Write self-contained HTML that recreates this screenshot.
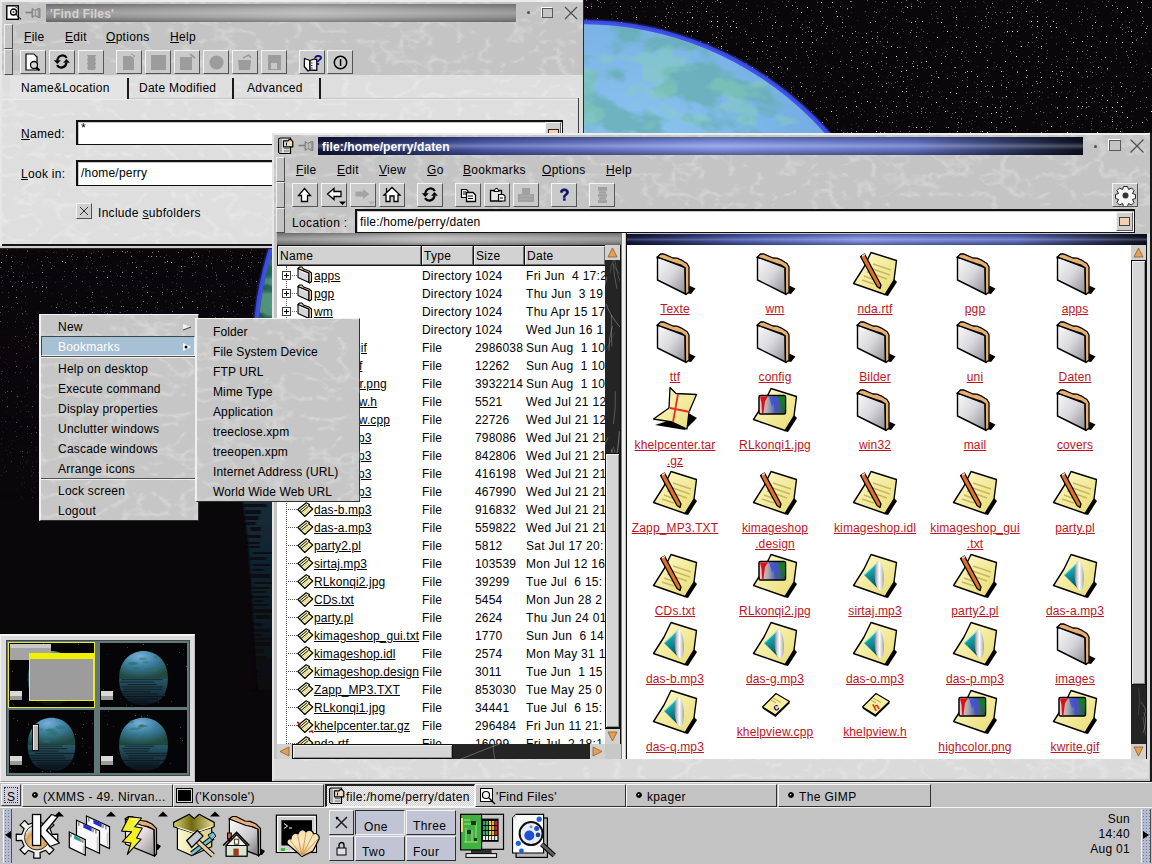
<!DOCTYPE html>
<html><head><meta charset="utf-8"><style>
*{margin:0;padding:0;box-sizing:border-box}
html,body{width:1152px;height:864px;overflow:hidden;background:#050307;font-family:"Liberation Sans",sans-serif;font-size:12px;color:#000}
.a{position:absolute}
.t{position:absolute;white-space:pre;line-height:14px}
.u{text-decoration:underline}
</style></head><body>
<svg class="a" style="left:0;top:0" width="1152" height="864">
<defs>
<radialGradient id="pl" cx="0.58" cy="0.22" r="0.72">
<stop offset="0" stop-color="#90c8f2"/><stop offset="0.45" stop-color="#70aae0"/><stop offset="0.62" stop-color="#4a88b8"/><stop offset="0.78" stop-color="#2a6a60"/><stop offset="0.92" stop-color="#1a4a38"/>
</radialGradient>
<filter id="clouds" x="0" y="0" width="1" height="1">
<feTurbulence type="fractalNoise" baseFrequency="0.018 0.03" numOctaves="4" seed="9" result="n"/>
<feColorMatrix in="n" type="matrix" values="0 0 0 0 0.13  0 0 0 0 0.42  0 0 0 0 0.42  -7 0 0 0 3.6" result="g"/>
<feComposite in="g" in2="SourceGraphic" operator="in"/>
</filter>
<filter id="clouds2" x="0" y="0" width="1" height="1">
<feTurbulence type="fractalNoise" baseFrequency="0.025 0.04" numOctaves="3" seed="21" result="n"/>
<feColorMatrix in="n" type="matrix" values="0 0 0 0 0.25  0 0 0 0 0.65  0 0 0 0 0.45  -7 0 0 0 3.4" result="g"/>
<feComposite in="g" in2="SourceGraphic" operator="in"/>
</filter>
<linearGradient id="reflg" x1="0" y1="500" x2="0" y2="700" gradientUnits="userSpaceOnUse"><stop offset="0" stop-color="#142c3a"/><stop offset="0.55" stop-color="#0e1e28"/><stop offset="1" stop-color="#0a070b"/></linearGradient>
<filter id="rblur" x="-5%" y="-5%" width="110%" height="110%"><feGaussianBlur stdDeviation="0.8 0.5"/></filter>
<clipPath id="upper"><rect x="0" y="0" width="1152" height="500"/></clipPath>
<filter id="st" x="0" y="0" width="1152" height="500" filterUnits="userSpaceOnUse" color-interpolation-filters="sRGB">
<feTurbulence type="fractalNoise" baseFrequency="0.8" numOctaves="1" seed="3" result="n"/>
<feColorMatrix in="n" type="matrix" values="1 0 0 0 0  1 0 0 0 0  1 0 0 0 0  0 0 0 0 1" result="a"/>
<feComponentTransfer in="a">
<feFuncR type="linear" slope="10" intercept="-6.9"/>
<feFuncG type="linear" slope="10" intercept="-6.9"/>
<feFuncB type="linear" slope="10" intercept="-6.9"/>
</feComponentTransfer>
<feColorMatrix type="matrix" values="0.95 0 0 0 0.04  0 0.95 0 0 0.028  0 0 0.95 0 0.045  0 0 0 0 1"/>
</filter>
<linearGradient id="stfade" x1="0" y1="0" x2="0" y2="1"><stop offset="0" stop-color="#fff"/><stop offset="0.42" stop-color="#fff"/><stop offset="0.56" stop-color="#999"/><stop offset="1" stop-color="#333"/></linearGradient>
<mask id="stmask" maskUnits="userSpaceOnUse" x="0" y="0" width="1152" height="500"><rect width="1152" height="500" fill="url(#stfade)"/></mask>
</defs>
<rect width="1152" height="864" fill="#0a070b"/>
<g mask="url(#stmask)"><rect width="1152" height="500" fill="#000" filter="url(#st)" /></g>
<g clip-path="url(#upper)">
<circle cx="582" cy="349" r="330.5" fill="rgba(50,60,200,0.35)"/>
<circle cx="582" cy="349" r="329" fill="#3848e0"/>
<circle cx="582" cy="349" r="325" fill="url(#pl)"/>
<circle cx="582" cy="349" r="324.5" fill="#000" filter="url(#clouds)" opacity="0.7"/><circle cx="582" cy="349" r="324.5" fill="#000" filter="url(#clouds2)" opacity="0.45"/>
<circle cx="582" cy="349" r="326" fill="none" stroke="rgba(70,90,235,0.5)" stroke-width="2.5"/>
</g>
<g filter="url(#rblur)"><polygon points="243,502 248,540 251,580 254,630 258,690 300,690 300,502" fill="url(#reflg)"/><rect x="243" y="504" width="24" height="3" fill="#0a070b" opacity="0.8"/><rect x="245" y="510" width="16" height="4" fill="#0a070b" opacity="0.8"/><rect x="244" y="516" width="15" height="4" fill="#0a070b" opacity="0.8"/><rect x="242" y="522" width="14" height="3" fill="#0a070b" opacity="0.8"/><rect x="250" y="527" width="11" height="4" fill="#0a070b" opacity="0.8"/><rect x="246" y="535" width="15" height="3" fill="#0a070b" opacity="0.8"/><rect x="248" y="542" width="12" height="2" fill="#0a070b" opacity="0.8"/><rect x="243" y="546" width="17" height="2" fill="#0a070b" opacity="0.8"/><rect x="253" y="552" width="24" height="2" fill="#0a070b" opacity="0.8"/><rect x="250" y="557" width="16" height="3" fill="#0a070b" opacity="0.8"/><rect x="252" y="564" width="19" height="2" fill="#0a070b" opacity="0.8"/><rect x="252" y="569" width="12" height="2" fill="#0a070b" opacity="0.8"/><rect x="247" y="574" width="23" height="4" fill="#0a070b" opacity="0.8"/><rect x="254" y="582" width="18" height="2" fill="#0a070b" opacity="0.8"/><rect x="251" y="587" width="19" height="2" fill="#0a070b" opacity="0.8"/><rect x="253" y="591" width="13" height="2" fill="#0a070b" opacity="0.8"/><rect x="248" y="596" width="22" height="2" fill="#0a070b" opacity="0.8"/><rect x="254" y="600" width="10" height="2" fill="#0a070b" opacity="0.8"/><rect x="244" y="604" width="25" height="2" fill="#0a070b" opacity="0.8"/><rect x="251" y="609" width="23" height="4" fill="#0a070b" opacity="0.8"/><rect x="255" y="615" width="16" height="4" fill="#0a070b" opacity="0.8"/><rect x="251" y="623" width="12" height="3" fill="#0a070b" opacity="0.8"/><rect x="246" y="629" width="23" height="3" fill="#0a070b" opacity="0.8"/><rect x="249" y="634" width="13" height="2" fill="#0a070b" opacity="0.8"/><rect x="254" y="638" width="25" height="2" fill="#0a070b" opacity="0.8"/><rect x="255" y="642" width="16" height="4" fill="#0a070b" opacity="0.8"/><rect x="250" y="649" width="14" height="4" fill="#0a070b" opacity="0.8"/><rect x="254" y="656" width="13" height="4" fill="#0a070b" opacity="0.8"/><rect x="251" y="663" width="10" height="3" fill="#0a070b" opacity="0.8"/><rect x="253" y="669" width="10" height="4" fill="#0a070b" opacity="0.8"/><rect x="255" y="675" width="13" height="2" fill="#0a070b" opacity="0.8"/><rect x="252" y="679" width="24" height="2" fill="#0a070b" opacity="0.8"/><rect x="262" y="684" width="20" height="2" fill="#0a070b" opacity="0.8"/><rect x="251" y="689" width="12" height="3" fill="#0a070b" opacity="0.8"/></g>
</svg><div class="a" style="left:0px;top:0px;width:584px;height:249px;background:#2a2a2a;"></div><div class="a" style="left:0px;top:0px;width:583px;height:248px;background:#c4c4c4;border-top:2px solid #ededed;border-left:2px solid #e6e6e6;"></div><svg width="0" height="0" style="position:absolute"><defs>
<filter id="marble" x="0" y="0" width="100%" height="100%" color-interpolation-filters="sRGB">
<feTurbulence type="turbulence" baseFrequency="0.035 0.05" numOctaves="3" seed="5" result="t"/>
<feColorMatrix in="t" type="matrix" values="0 0 0 0 1  0 0 0 0 1  0 0 0 0 1  -4 0 0 0 1.0" result="w"/>
<feComponentTransfer in="w"><feFuncA type="linear" slope="0.3" intercept="0"/></feComponentTransfer>
</filter>
</defs></svg><svg class="a" style="left:2px;top:2px;opacity:1.0" width="581" height="73"><rect width="581" height="73" fill="#fff" filter="url(#marble)"/></svg><svg class="a" style="left:6px;top:5px;" width="17" height="17" viewBox="0 0 17 17"><rect x="0.8" y="0.8" width="11.5" height="13.5" fill="#fff" stroke="#000" stroke-width="1.4"/><circle cx="7.5" cy="7" r="3" fill="none" stroke="#000" stroke-width="1.3"/><circle cx="7.5" cy="7" r="1" fill="#303060"/><path d="M10 9.5l5 5" stroke="#000" stroke-width="1.3" stroke-dasharray="1.2 0.6"/><path d="M9.5 1.8l1.5 1.5" stroke="#000"/></svg><svg class="a" style="left:25px;top:7px;" width="16" height="12" viewBox="0 0 16 12"><path d="M0.5 5.5h7" stroke="#808080" stroke-width="1.6"/><path d="M7 1.5L10 3.5L13 1.5L15 1.5L15 10.5L13 10.5L10 8.5L7 10.5z" fill="#9a9a9a" stroke="#7a7a7a" stroke-width="0.8"/><path d="M9 3.5v5M12 3.5v5" stroke="#e0e0e0" stroke-width="1"/></svg><div class="a" style="left:46px;top:4px;width:470px;height:18px;background:linear-gradient(to bottom,rgba(0,0,0,.22) 0%,rgba(255,255,255,.0) 28%,rgba(255,255,255,.16) 50%,rgba(0,0,0,0) 72%,rgba(0,0,0,.28) 100%),linear-gradient(to right,#8a8a8a 0%,#b4b4b4 55%,#8e8e8e 100%)"></div><div class="t" style="left:50px;top:7px;font-size:12px;color:#d2d2d2;font-weight:bold;letter-spacing:0.2px;">'Find Files'</div><div class="a" style="left:527px;top:11px;width:3px;height:3px;background:#505050;border-radius:2px;"></div><div class="a" style="left:542px;top:8px;width:11px;height:10px;border:1px solid #5a5a5a;box-shadow:-1px -1px 0 #fff;"></div><svg class="a" style="left:564px;top:6px;" width="14" height="14" viewBox="0 0 14 14"><path d="M1 1L13 13M13 1L1 13" stroke="#505050" stroke-width="1.2"/></svg><div class="a" style="left:4px;top:24px;width:9px;height:25px;background:#c4c4c4;border-style:solid;border-width:1px;border-color:#f0f0f0 #505050 #505050 #f0f0f0;"></div><div class="a" style="left:4px;top:49px;width:9px;height:26px;background:#c4c4c4;border-style:solid;border-width:1px;border-color:#f0f0f0 #505050 #505050 #f0f0f0;"></div><div class="t" style="left:24px;top:30px;font-size:12px;color:#000;letter-spacing:0.3px;"><u>F</u>ile</div><div class="t" style="left:65px;top:30px;font-size:12px;color:#000;letter-spacing:0.3px;"><u>E</u>dit</div><div class="t" style="left:106px;top:30px;font-size:12px;color:#000;letter-spacing:0.3px;"><u>O</u>ptions</div><div class="t" style="left:170px;top:30px;font-size:12px;color:#000;letter-spacing:0.3px;"><u>H</u>elp</div><div class="a" style="left:20px;top:50px;width:26px;height:24px;background:#cacaca;border-style:solid;border-width:1px;border-color:#f4f4f4 #555555 #555555 #f4f4f4;"></div><svg class="a" style="left:21px;top:51px;" width="24" height="22" viewBox="0 0 24 22"><path d="M5 3h8l3 3v13H5z" fill="#fff" stroke="#000" stroke-width="1.2"/><circle cx="13" cy="14" r="3.5" fill="#d8d8d8" stroke="#000" stroke-width="1.3"/><path d="M15.5 16.5l3 3" stroke="#000" stroke-width="2"/></svg><div class="a" style="left:49px;top:50px;width:26px;height:24px;background:#cacaca;border-style:solid;border-width:1px;border-color:#f4f4f4 #555555 #555555 #f4f4f4;"></div><svg class="a" style="left:50px;top:51px;" width="24" height="22" viewBox="0 0 24 22"><path d="M7.3 9.8A5.2 5.6 0 0 1 16.8 7" fill="none" stroke="#000" stroke-width="2.2"/><path d="M3.8 9.2L10.8 9.2L7.3 13Z" fill="#000"/><path d="M7 14.2A5.2 5.6 0 0 0 16.4 11.8" fill="none" stroke="#000" stroke-width="2.2"/><path d="M13.1 11.8L19.9 11.8L16.5 8Z" fill="#000"/></svg><div class="a" style="left:78px;top:50px;width:26px;height:24px;background:#cacaca;border-style:solid;border-width:1px;border-color:#f4f4f4 #555555 #555555 #f4f4f4;"></div><svg class="a" style="left:79px;top:51px;" width="24" height="22" viewBox="0 0 24 22"><path d="M8 4h9l-1 3l1 1l-1 3l1 1l-1 3l1 1l-1 3h-7l-1-3l1-1l-1-3l1-1l-1-3l1-1z" fill="#9c9c9c"/></svg><div class="a" style="left:116px;top:50px;width:26px;height:24px;background:#cacaca;border-style:solid;border-width:1px;border-color:#f4f4f4 #555555 #555555 #f4f4f4;"></div><svg class="a" style="left:117px;top:51px;" width="24" height="22" viewBox="0 0 24 22"><path d="M6 5h8l3 3v11H6z" fill="#9c9c9c"/><path d="M14 3l4 2l-3 2" fill="none" stroke="#9c9c9c"/></svg><div class="a" style="left:145px;top:50px;width:26px;height:24px;background:#cacaca;border-style:solid;border-width:1px;border-color:#f4f4f4 #555555 #555555 #f4f4f4;"></div><svg class="a" style="left:146px;top:51px;" width="24" height="22" viewBox="0 0 24 22"><rect x="5" y="4" width="15" height="15" fill="#9c9c9c"/></svg><div class="a" style="left:174px;top:50px;width:26px;height:24px;background:#cacaca;border-style:solid;border-width:1px;border-color:#f4f4f4 #555555 #555555 #f4f4f4;"></div><svg class="a" style="left:175px;top:51px;" width="24" height="22" viewBox="0 0 24 22"><path d="M5 6h12v13H5z" fill="#9c9c9c"/><path d="M15 3l5 4" stroke="#9c9c9c" stroke-width="2"/></svg><div class="a" style="left:203px;top:50px;width:26px;height:24px;background:#cacaca;border-style:solid;border-width:1px;border-color:#f4f4f4 #555555 #555555 #f4f4f4;"></div><svg class="a" style="left:204px;top:51px;" width="24" height="22" viewBox="0 0 24 22"><circle cx="12.5" cy="11.5" r="7" fill="#9c9c9c"/></svg><div class="a" style="left:232px;top:50px;width:26px;height:24px;background:#cacaca;border-style:solid;border-width:1px;border-color:#f4f4f4 #555555 #555555 #f4f4f4;"></div><svg class="a" style="left:233px;top:51px;" width="24" height="22" viewBox="0 0 24 22"><path d="M5 9h13l-1 10H6z" fill="#9c9c9c"/><path d="M10 7l6-3l2 3" fill="none" stroke="#9c9c9c" stroke-width="1.5"/></svg><div class="a" style="left:261px;top:50px;width:26px;height:24px;background:#cacaca;border-style:solid;border-width:1px;border-color:#f4f4f4 #555555 #555555 #f4f4f4;"></div><svg class="a" style="left:262px;top:51px;" width="24" height="22" viewBox="0 0 24 22"><rect x="6" y="4" width="13" height="15" fill="#9c9c9c"/><rect x="9" y="12" width="6" height="6" fill="#c8c8c8"/></svg><div class="a" style="left:299px;top:50px;width:26px;height:24px;background:#cacaca;border-style:solid;border-width:1px;border-color:#f4f4f4 #555555 #555555 #f4f4f4;"></div><svg class="a" style="left:300px;top:51px;" width="24" height="22" viewBox="0 0 24 22"><path d="M4.5 7.5L10 9.5L10 19L8 20L4.3 15.5Z" fill="#fff" stroke="#000" stroke-width="1.3" stroke-linejoin="round"/><path d="M10 9.5L14.2 8L16.8 8.5L16.8 19.4L10 19Z" fill="#f0f0f0" stroke="#000" stroke-width="1.3" stroke-linejoin="round"/><path d="M11 12h1.5M11 14.5h1.5M11 17h1.5" stroke="#000" stroke-width="0.8"/><text x="13.5" y="14" font-family="Liberation Sans" font-weight="bold" font-size="15" fill="#10107a">?</text></svg><div class="a" style="left:327px;top:50px;width:26px;height:24px;background:#cacaca;border-style:solid;border-width:1px;border-color:#f4f4f4 #555555 #555555 #f4f4f4;"></div><svg class="a" style="left:328px;top:51px;" width="24" height="22" viewBox="0 0 24 22"><circle cx="12.5" cy="11.5" r="6.2" fill="none" stroke="#000" stroke-width="1.5"/><rect x="11.8" y="8" width="1.5" height="7" fill="#000"/></svg><div class="a" style="left:2px;top:75px;width:581px;height:170px;background:#dedede;"></div><svg class="a" style="left:2px;top:75px;opacity:1.0" width="577" height="169"><rect width="577" height="169" fill="#fff" filter="url(#marble)"/></svg><div class="a" style="left:128px;top:98px;width:451px;height:1px;background:#c4c4c4;"></div><div class="a" style="left:2px;top:99px;width:577px;height:1px;background:#ececec;"></div><div class="a" style="left:10px;top:76px;width:118px;height:23px;background:#e4e4e4;"></div><div class="a" style="left:127px;top:78px;width:2px;height:21px;background:#1a1a1a;"></div><div class="a" style="left:232px;top:78px;width:2px;height:21px;background:#1a1a1a;"></div><div class="a" style="left:319px;top:78px;width:2px;height:21px;background:#1a1a1a;"></div><div class="a" style="left:578px;top:98px;width:1px;height:146px;background:#404040;"></div><div class="t" style="left:21px;top:81px;font-size:12px;color:#000;letter-spacing:0.25px;">Name&amp;Location</div><div class="t" style="left:139px;top:81px;font-size:12px;color:#000;letter-spacing:0.25px;">Date Modified</div><div class="t" style="left:247px;top:81px;font-size:12px;color:#000;letter-spacing:0.3px;">Advanced</div><div class="t" style="left:21px;top:127px;font-size:12px;color:#000;letter-spacing:0.3px;"><u>N</u>amed:</div><div class="a" style="left:76px;top:120px;width:487px;height:25px;background:#fff;border-top:2px solid #101010;border-left:2px solid #101010;border-right:1px solid #101010;border-bottom:1px solid #101010;box-shadow:inset 1px 1px 0 #c8c8c8;"></div><div class="t" style="left:81px;top:121px;font-size:12px;color:#000;">*</div><div class="a" style="left:545px;top:122px;width:16px;height:16px;background:#cfcfcf;border-style:solid;border-width:1px;border-color:#f4f4f4 #606060 #606060 #f4f4f4;"></div><div class="a" style="left:548px;top:129px;width:11px;height:6px;background:#f0d0b8;border:1px solid #302010;"></div><div class="t" style="left:21px;top:167px;font-size:12px;color:#000;letter-spacing:0.3px;"><u>L</u>ook in:</div><div class="a" style="left:76px;top:160px;width:487px;height:26px;background:#fff;border-top:2px solid #101010;border-left:2px solid #101010;border-right:1px solid #101010;border-bottom:1px solid #101010;box-shadow:inset 1px 1px 0 #c8c8c8;"></div><div class="t" style="left:81px;top:166px;font-size:12px;color:#000;letter-spacing:0.2px;">/home/perry</div><div class="a" style="left:76px;top:203px;width:16px;height:16px;background:#d0d0d0;border-style:solid;border-width:1px;border-color:#f4f4f4 #505050 #505050 #f4f4f4;"></div><svg class="a" style="left:78px;top:205px;" width="12" height="12" viewBox="0 0 12 12"><path d="M2 2L10 10M10 2L2 10" stroke="#303030" stroke-width="1"/></svg><div class="t" style="left:98px;top:206px;font-size:12px;color:#000;letter-spacing:0.3px;">Include <u>s</u>ubfolders</div><div class="a" style="left:2px;top:244px;width:581px;height:2px;background:#141414;"></div><div class="a" style="left:0px;top:246px;width:583px;height:2px;background:#d0d0d0;"></div><div class="a" style="left:272px;top:133px;width:880px;height:649px;background:#1a1a1a;"></div><div class="a" style="left:272px;top:133px;width:878px;height:648px;background:#c4c4c4;border-top:2px solid #ededed;border-left:2px solid #e6e6e6;"></div><svg class="a" style="left:274px;top:135px;opacity:1.0" width="876" height="98"><rect width="876" height="98" fill="#fff" filter="url(#marble)"/></svg><svg class="a" style="left:278px;top:137px;" width="17" height="18" viewBox="0 0 17 18"><path d="M0.6 2L2 1L12.5 1L12.5 16.5L2 16.5L0.6 15.5Z" fill="#d4d4d4" stroke="#000" stroke-width="1.2"/><rect x="1.6" y="2" width="3" height="13.5" fill="#a8a8a8"/><path d="M4.8 2v14" stroke="#fff" stroke-width="0.8"/><path d="M6 11.5h5M6 14h5" stroke="#707070" stroke-width="0.9"/><path d="M5.5 3.8L10 3.8L11 2.6L13 2.6L14.8 4.6L14.8 9.8L5.5 9.8Z" fill="#f0dcc0" stroke="#000" stroke-width="1.2" stroke-linejoin="round"/><path d="M8.5 5.5v3" stroke="#000" stroke-width="1"/></svg><svg class="a" style="left:298px;top:140px;" width="16" height="12" viewBox="0 0 16 12"><path d="M0.5 5.5h7" stroke="#808080" stroke-width="1.6"/><path d="M7 1.5L10 3.5L13 1.5L15 1.5L15 10.5L13 10.5L10 8.5L7 10.5z" fill="#9a9a9a" stroke="#7a7a7a" stroke-width="0.8"/><path d="M9 3.5v5M12 3.5v5" stroke="#e0e0e0" stroke-width="1"/></svg><div class="a" style="left:318px;top:137px;width:765px;height:18px;background:linear-gradient(to bottom,rgba(0,0,0,0.3) 0%,rgba(0,0,0,0) 30%,rgba(255,255,255,0.25) 50%,rgba(0,0,0,0) 70%,rgba(0,0,0,0.35) 100%),linear-gradient(to right,#10163a 0%,#4a58a8 22%,#8090e0 52%,#6070c0 78%,#0c1020 100%)"></div><div class="t" style="left:322px;top:140px;font-size:12px;color:#fff;font-weight:bold;letter-spacing:0.1px;">file:/home/perry/daten</div><div class="a" style="left:1094px;top:145px;width:3px;height:3px;background:#505050;border-radius:2px;"></div><div class="a" style="left:1109px;top:140px;width:12px;height:11px;border:1px solid #5a5a5a;box-shadow:-1px -1px 0 #fff;"></div><svg class="a" style="left:1129px;top:138px;" width="16" height="16" viewBox="0 0 16 16"><path d="M1.5 1.5L14.5 14.5M14.5 1.5L1.5 14.5" stroke="#505050" stroke-width="1.2"/></svg><div class="a" style="left:276px;top:157px;width:9px;height:25px;background:#c4c4c4;border-style:solid;border-width:1px;border-color:#f0f0f0 #505050 #505050 #f0f0f0;"></div><div class="a" style="left:276px;top:182px;width:9px;height:26px;background:#c4c4c4;border-style:solid;border-width:1px;border-color:#f0f0f0 #505050 #505050 #f0f0f0;"></div><div class="a" style="left:276px;top:208px;width:9px;height:25px;background:#c4c4c4;border-style:solid;border-width:1px;border-color:#f0f0f0 #505050 #505050 #f0f0f0;"></div><div class="t" style="left:296px;top:163px;font-size:12px;color:#000;letter-spacing:0.3px;"><u>F</u>ile</div><div class="t" style="left:337px;top:163px;font-size:12px;color:#000;letter-spacing:0.3px;"><u>E</u>dit</div><div class="t" style="left:379px;top:163px;font-size:12px;color:#000;letter-spacing:0.3px;"><u>V</u>iew</div><div class="t" style="left:427px;top:163px;font-size:12px;color:#000;letter-spacing:0.3px;"><u>G</u>o</div><div class="t" style="left:463px;top:163px;font-size:12px;color:#000;letter-spacing:0.3px;"><u>B</u>ookmarks</div><div class="t" style="left:542px;top:163px;font-size:12px;color:#000;letter-spacing:0.3px;"><u>O</u>ptions</div><div class="t" style="left:606px;top:163px;font-size:12px;color:#000;letter-spacing:0.3px;"><u>H</u>elp</div><div class="a" style="left:292px;top:183px;width:26px;height:24px;background:#cacaca;border-style:solid;border-width:1px;border-color:#f4f4f4 #555555 #555555 #f4f4f4;"></div><svg class="a" style="left:293px;top:184px;" width="24" height="22" viewBox="0 0 24 22"><path d="M11.5 4.5L17.5 11.5L14.5 11.5L14.5 17.5L8.5 17.5L8.5 11.5L5.5 11.5Z" fill="#fff" stroke="#000" stroke-width="1.3" stroke-linejoin="miter"/></svg><div class="a" style="left:321px;top:183px;width:26px;height:24px;background:#cacaca;border-style:solid;border-width:1px;border-color:#f4f4f4 #555555 #555555 #f4f4f4;"></div><svg class="a" style="left:322px;top:184px;" width="24" height="22" viewBox="0 0 24 22"><path d="M5.5 10L12 4.5L12 7.5L19 7.5L19 12.5L12 12.5L12 15.5Z" fill="#fff" stroke="#000" stroke-width="1.3"/><path d="M17 17.5h7l-3.5 3.5z" fill="#000"/></svg><div class="a" style="left:350px;top:183px;width:26px;height:24px;background:#cacaca;border-style:solid;border-width:1px;border-color:#f4f4f4 #555555 #555555 #f4f4f4;"></div><svg class="a" style="left:351px;top:184px;" width="24" height="22" viewBox="0 0 24 22"><path d="M18.5 10L12 5L12 7.5L4.5 7.5L4.5 12.5L12 12.5L12 15Z" fill="#a4a4a4"/><path d="M17 17.5h7l-3.5 3.5z" fill="#b0b0b0"/></svg><div class="a" style="left:379px;top:183px;width:26px;height:24px;background:#cacaca;border-style:solid;border-width:1px;border-color:#f4f4f4 #555555 #555555 #f4f4f4;"></div><svg class="a" style="left:380px;top:184px;" width="24" height="22" viewBox="0 0 24 22"><path d="M4 11L12 3.5L20 11L18 11L18 17.5L14 17.5L14 12L10 12L10 17.5L6 17.5L6 11Z" fill="#fff" stroke="#000" stroke-width="1.3"/><path d="M6.5 4V8" stroke="#000" stroke-width="1.2"/></svg><div class="a" style="left:417px;top:183px;width:26px;height:24px;background:#cacaca;border-style:solid;border-width:1px;border-color:#f4f4f4 #555555 #555555 #f4f4f4;"></div><svg class="a" style="left:418px;top:184px;" width="24" height="22" viewBox="0 0 24 22"><path d="M7.3 9.8A5.2 5.6 0 0 1 16.8 7" fill="none" stroke="#000" stroke-width="2.2"/><path d="M3.8 9.2L10.8 9.2L7.3 13Z" fill="#000"/><path d="M7 14.2A5.2 5.6 0 0 0 16.4 11.8" fill="none" stroke="#000" stroke-width="2.2"/><path d="M13.1 11.8L19.9 11.8L16.5 8Z" fill="#000"/></svg><div class="a" style="left:455px;top:183px;width:26px;height:24px;background:#cacaca;border-style:solid;border-width:1px;border-color:#f4f4f4 #555555 #555555 #f4f4f4;"></div><svg class="a" style="left:456px;top:184px;" width="24" height="22" viewBox="0 0 24 22"><path d="M5.5 5.5h5l1.5 1.5v6.5h-6.5z" fill="#fff" stroke="#000" stroke-width="1.2"/><path d="M7 8h3M7 10h3" stroke="#000"/><path d="M10.5 8.5h6.5l2.5 2.5v6.5h-9z" fill="#fff" stroke="#000" stroke-width="1.3"/><path d="M12 12h5M12 14.5h5" stroke="#000"/></svg><div class="a" style="left:484px;top:183px;width:26px;height:24px;background:#cacaca;border-style:solid;border-width:1px;border-color:#f4f4f4 #555555 #555555 #f4f4f4;"></div><svg class="a" style="left:485px;top:184px;" width="24" height="22" viewBox="0 0 24 22"><path d="M5.5 6.5h11v10.5h-11z" fill="#e8e8e8" stroke="#000" stroke-width="1.3"/><path d="M9 7.5l1.5-3h2l1.5 3z" fill="#fff" stroke="#000"/><path d="M13.5 10.5h5l1.5 1.5v5h-6.5z" fill="#fff" stroke="#000" stroke-width="1.2"/><path d="M15 14h3" stroke="#000"/></svg><div class="a" style="left:513px;top:183px;width:26px;height:24px;background:#cacaca;border-style:solid;border-width:1px;border-color:#f4f4f4 #555555 #555555 #f4f4f4;"></div><svg class="a" style="left:514px;top:184px;" width="24" height="22" viewBox="0 0 24 22"><path d="M8 4h8v6h4v8H4v-8h4z" fill="#a0a0a0"/><path d="M6 12h12M6 15h12" stroke="#b0b0b0"/></svg><div class="a" style="left:551px;top:183px;width:26px;height:24px;background:#cacaca;border-style:solid;border-width:1px;border-color:#f4f4f4 #555555 #555555 #f4f4f4;"></div><svg class="a" style="left:552px;top:184px;" width="24" height="22" viewBox="0 0 24 22"><path d="M8.3 8.3C8.3 5.8 10.2 4.8 12.4 4.8C14.8 4.8 16.6 6.1 16.6 8.3C16.6 10.4 14.9 11 13.9 11.8C13.3 12.3 13.3 12.8 13.3 13.4L11.3 13.4C11.3 12.4 11.4 11.5 12.3 10.8C13.3 10 14.2 9.6 14.2 8.4C14.2 7.4 13.5 6.8 12.4 6.8C11.3 6.8 10.6 7.5 10.6 8.6Z" fill="#10106a" stroke="#10106a" stroke-width="0.6"/><rect x="11.1" y="14.3" width="2.5" height="2.4" fill="#10106a"/></svg><div class="a" style="left:589px;top:183px;width:26px;height:24px;background:#cacaca;border-style:solid;border-width:1px;border-color:#f4f4f4 #555555 #555555 #f4f4f4;"></div><svg class="a" style="left:590px;top:184px;" width="24" height="22" viewBox="0 0 24 22"><path d="M8 3h9v4h-1v3h1v3h-1v3h1v3h-9v-3h1v-3h-1v-3h1v-3h-1z" fill="#a0a0a0"/><path d="M9 7h7M9 10h7M9 13h7M9 16h7" stroke="#b4b4b4"/></svg><div class="a" style="left:1112px;top:183px;width:26px;height:24px;background:#cacaca;border-style:solid;border-width:1px;border-color:#f4f4f4 #555555 #555555 #f4f4f4;"></div><svg class="a" style="left:1113px;top:184px;" width="24" height="22" viewBox="0 0 24 22"><g transform="translate(12.5 11.5)"><path d="M-2 -9h4l1 3l3 -1.5l2.5 2.5l-1.5 3l3 1v4l-3 1l1.5 3l-2.5 2.5l-3 -1.5l-1 3h-4l-1 -3l-3 1.5l-2.5 -2.5l1.5 -3l-3 -1v-4l3 -1l-1.5 -3l2.5 -2.5l3 1.5z" fill="#f4f4f4" stroke="#222" stroke-width="1"/><circle r="3" fill="#333"/></g></svg><div class="t" style="left:292px;top:216px;font-size:12px;color:#000;letter-spacing:0.35px;">Location :</div><div class="a" style="left:355px;top:209px;width:780px;height:24px;background:#fff;border-top:2px solid #101010;border-left:2px solid #101010;border-right:1px solid #101010;border-bottom:1px solid #101010;box-shadow:inset 1px 1px 0 #c8c8c8;"></div><div class="t" style="left:360px;top:215px;font-size:12px;color:#000;letter-spacing:0.2px;">file:/home/perry/daten</div><div class="a" style="left:1116px;top:212px;width:17px;height:19px;background:#cfcfcf;border-style:solid;border-width:1px;border-color:#f4f4f4 #606060 #606060 #f4f4f4;"></div><div class="a" style="left:1119px;top:217px;width:11px;height:9px;background:#f0d0b8;border:1px solid #504030;"></div><div class="a" style="left:277px;top:233px;width:344px;height:12px;background:linear-gradient(to bottom,rgba(0,0,0,.22) 0%,rgba(255,255,255,.0) 28%,rgba(255,255,255,.16) 50%,rgba(0,0,0,0) 72%,rgba(0,0,0,.28) 100%),linear-gradient(to right,#888888 0%,#b8b8b8 45%,#8c8c8c 100%)"></div><div class="a" style="left:277px;top:245px;width:328px;height:499px;background:#fff;"></div><div class="a" style="left:277px;top:245px;width:328px;height:21px;background:#101010;"></div><div class="a" style="left:278px;top:246px;width:143px;height:19px;background:#d2d2d2;border-style:solid;border-width:1px;border-color:#f0f0f0 #707070 #707070 #f0f0f0;"></div><div class="t" style="left:280px;top:249px;font-size:12px;color:#000;letter-spacing:0.3px;">Name</div><div class="a" style="left:422px;top:246px;width:51px;height:19px;background:#d2d2d2;border-style:solid;border-width:1px;border-color:#f0f0f0 #707070 #707070 #f0f0f0;"></div><div class="t" style="left:424px;top:249px;font-size:12px;color:#000;letter-spacing:0.3px;">Type</div><div class="a" style="left:474px;top:246px;width:50px;height:19px;background:#d2d2d2;border-style:solid;border-width:1px;border-color:#f0f0f0 #707070 #707070 #f0f0f0;"></div><div class="t" style="left:476px;top:249px;font-size:12px;color:#000;letter-spacing:0.3px;">Size</div><div class="a" style="left:525px;top:246px;width:80px;height:19px;background:#d2d2d2;border-style:solid;border-width:1px;border-color:#f0f0f0 #707070 #707070 #f0f0f0;"></div><div class="t" style="left:527px;top:249px;font-size:12px;color:#000;letter-spacing:0.3px;">Date</div><div class="a" style="left:286px;top:266px;width:1px;height:478px;border-left:1px dotted #606060;"></div><div class="a" style="left:0;top:0;width:605px;height:744px;overflow:hidden;clip-path:inset(266px 0 0 277px)"><div class="a" style="left:288px;top:275px;width:9px;height:1px;border-top:1px dotted #606060;"></div><div class="a" style="left:282px;top:271px;width:9px;height:9px;background:#fff;border:1px solid #404040;"></div><div class="a" style="left:284px;top:275px;width:5px;height:1px;background:#000;"></div><div class="a" style="left:286px;top:273px;width:1px;height:5px;background:#000;"></div><svg class="a" style="left:297px;top:266px;" width="17" height="18" viewBox="0 0 17 18"><path d="M1 2.5L12 7L12 16.5L1 11.5Z" fill="#d4d4dc" stroke="#000" stroke-width="1.1" stroke-linejoin="round"/><path d="M2.5 4.5L10 8" stroke="#f4f4f4" stroke-width="1"/><path d="M1 2.5L2.5 1L5 1L6.5 3L12 5L14.5 7L14.5 15.5L12.5 17L12 16.5L12 7Z" fill="#f0d4a0" stroke="#000" stroke-width="1.1" stroke-linejoin="round"/></svg><div class="t" style="left:314px;top:269px;font-size:12px;color:#000;text-decoration:underline;letter-spacing:0.1px;">apps</div><div class="t" style="left:422px;top:269px;font-size:12px;color:#000;letter-spacing:0.2px;">Directory</div><div class="t" style="left:475px;top:269px;font-size:12px;color:#000;letter-spacing:0.2px;">1024</div><div class="t" style="left:526px;top:269px;font-size:12px;color:#000;letter-spacing:0.3px;">Fri Jun  4 17:2</div><div class="a" style="left:288px;top:293px;width:9px;height:1px;border-top:1px dotted #606060;"></div><div class="a" style="left:282px;top:289px;width:9px;height:9px;background:#fff;border:1px solid #404040;"></div><div class="a" style="left:284px;top:293px;width:5px;height:1px;background:#000;"></div><div class="a" style="left:286px;top:291px;width:1px;height:5px;background:#000;"></div><svg class="a" style="left:297px;top:284px;" width="17" height="18" viewBox="0 0 17 18"><path d="M1 2.5L12 7L12 16.5L1 11.5Z" fill="#d4d4dc" stroke="#000" stroke-width="1.1" stroke-linejoin="round"/><path d="M2.5 4.5L10 8" stroke="#f4f4f4" stroke-width="1"/><path d="M1 2.5L2.5 1L5 1L6.5 3L12 5L14.5 7L14.5 15.5L12.5 17L12 16.5L12 7Z" fill="#f0d4a0" stroke="#000" stroke-width="1.1" stroke-linejoin="round"/></svg><div class="t" style="left:314px;top:287px;font-size:12px;color:#000;text-decoration:underline;letter-spacing:0.1px;">pgp</div><div class="t" style="left:422px;top:287px;font-size:12px;color:#000;letter-spacing:0.2px;">Directory</div><div class="t" style="left:475px;top:287px;font-size:12px;color:#000;letter-spacing:0.2px;">1024</div><div class="t" style="left:526px;top:287px;font-size:12px;color:#000;letter-spacing:0.3px;">Thu Jun  3 19</div><div class="a" style="left:288px;top:311px;width:9px;height:1px;border-top:1px dotted #606060;"></div><div class="a" style="left:282px;top:307px;width:9px;height:9px;background:#fff;border:1px solid #404040;"></div><div class="a" style="left:284px;top:311px;width:5px;height:1px;background:#000;"></div><div class="a" style="left:286px;top:309px;width:1px;height:5px;background:#000;"></div><svg class="a" style="left:297px;top:302px;" width="17" height="18" viewBox="0 0 17 18"><path d="M1 2.5L12 7L12 16.5L1 11.5Z" fill="#d4d4dc" stroke="#000" stroke-width="1.1" stroke-linejoin="round"/><path d="M2.5 4.5L10 8" stroke="#f4f4f4" stroke-width="1"/><path d="M1 2.5L2.5 1L5 1L6.5 3L12 5L14.5 7L14.5 15.5L12.5 17L12 16.5L12 7Z" fill="#f0d4a0" stroke="#000" stroke-width="1.1" stroke-linejoin="round"/></svg><div class="t" style="left:314px;top:305px;font-size:12px;color:#000;text-decoration:underline;letter-spacing:0.1px;">wm</div><div class="t" style="left:422px;top:305px;font-size:12px;color:#000;letter-spacing:0.2px;">Directory</div><div class="t" style="left:475px;top:305px;font-size:12px;color:#000;letter-spacing:0.2px;">1024</div><div class="t" style="left:526px;top:305px;font-size:12px;color:#000;letter-spacing:0.3px;">Thu Apr 15 17</div><div class="a" style="left:288px;top:329px;width:9px;height:1px;border-top:1px dotted #606060;"></div><div class="a" style="left:282px;top:325px;width:9px;height:9px;background:#fff;border:1px solid #404040;"></div><div class="a" style="left:284px;top:329px;width:5px;height:1px;background:#000;"></div><div class="a" style="left:286px;top:327px;width:1px;height:5px;background:#000;"></div><svg class="a" style="left:297px;top:320px;" width="17" height="18" viewBox="0 0 17 18"><path d="M1 2.5L12 7L12 16.5L1 11.5Z" fill="#d4d4dc" stroke="#000" stroke-width="1.1" stroke-linejoin="round"/><path d="M2.5 4.5L10 8" stroke="#f4f4f4" stroke-width="1"/><path d="M1 2.5L2.5 1L5 1L6.5 3L12 5L14.5 7L14.5 15.5L12.5 17L12 16.5L12 7Z" fill="#f0d4a0" stroke="#000" stroke-width="1.1" stroke-linejoin="round"/></svg><div class="t" style="left:314px;top:323px;font-size:12px;color:#000;text-decoration:underline;letter-spacing:0.1px;">Texte</div><div class="t" style="left:422px;top:323px;font-size:12px;color:#000;letter-spacing:0.2px;">Directory</div><div class="t" style="left:475px;top:323px;font-size:12px;color:#000;letter-spacing:0.2px;">1024</div><div class="t" style="left:526px;top:323px;font-size:12px;color:#000;letter-spacing:0.3px;">Wed Jun 16 1</div><div class="a" style="left:288px;top:347px;width:9px;height:1px;border-top:1px dotted #606060;"></div><svg class="a" style="left:297px;top:340px;" width="17" height="16" viewBox="0 0 17 16"><path d="M0.8 7.5L9.2 0.8L12.5 2.5L11.8 3.5L15.8 7L7.8 14.5Z" fill="#f4f0b8" stroke="#000" stroke-width="1.1" stroke-linejoin="round"/><path d="M2.5 9L10 2.8M4 10.5L11.5 4.3" stroke="#000" stroke-width="0.9"/><path d="M6 11l5-4.5M7.5 12.2l5-4.5" stroke="#c8c060" stroke-width="0.8"/></svg><div class="t" style="left:314px;top:341px;font-size:12px;color:#000;text-decoration:underline;letter-spacing:0.1px;">screen.gif</div><div class="t" style="left:422px;top:341px;font-size:12px;color:#000;letter-spacing:0.2px;">File</div><div class="t" style="left:475px;top:341px;font-size:12px;color:#000;letter-spacing:0.2px;">2986038</div><div class="t" style="left:526px;top:341px;font-size:12px;color:#000;letter-spacing:0.3px;">Sun Aug  1 10</div><div class="a" style="left:288px;top:365px;width:9px;height:1px;border-top:1px dotted #606060;"></div><svg class="a" style="left:297px;top:358px;" width="17" height="16" viewBox="0 0 17 16"><path d="M0.8 7.5L9.2 0.8L12.5 2.5L11.8 3.5L15.8 7L7.8 14.5Z" fill="#f4f0b8" stroke="#000" stroke-width="1.1" stroke-linejoin="round"/><path d="M2.5 9L10 2.8M4 10.5L11.5 4.3" stroke="#000" stroke-width="0.9"/><path d="M6 11l5-4.5M7.5 12.2l5-4.5" stroke="#c8c060" stroke-width="0.8"/></svg><div class="t" style="left:314px;top:359px;font-size:12px;color:#000;text-decoration:underline;letter-spacing:0.1px;">kwrite.gif</div><div class="t" style="left:422px;top:359px;font-size:12px;color:#000;letter-spacing:0.2px;">File</div><div class="t" style="left:475px;top:359px;font-size:12px;color:#000;letter-spacing:0.2px;">12262</div><div class="t" style="left:526px;top:359px;font-size:12px;color:#000;letter-spacing:0.3px;">Sun Aug  1 10</div><div class="a" style="left:288px;top:383px;width:9px;height:1px;border-top:1px dotted #606060;"></div><svg class="a" style="left:297px;top:376px;" width="17" height="16" viewBox="0 0 17 16"><path d="M0.8 7.5L9.2 0.8L12.5 2.5L11.8 3.5L15.8 7L7.8 14.5Z" fill="#f4f0b8" stroke="#000" stroke-width="1.1" stroke-linejoin="round"/><path d="M2.5 9L10 2.8M4 10.5L11.5 4.3" stroke="#000" stroke-width="0.9"/><path d="M6 11l5-4.5M7.5 12.2l5-4.5" stroke="#c8c060" stroke-width="0.8"/></svg><div class="t" style="left:314px;top:377px;font-size:12px;color:#000;text-decoration:underline;letter-spacing:0.1px;">highcolor.png</div><div class="t" style="left:422px;top:377px;font-size:12px;color:#000;letter-spacing:0.2px;">File</div><div class="t" style="left:475px;top:377px;font-size:12px;color:#000;letter-spacing:0.2px;">3932214</div><div class="t" style="left:526px;top:377px;font-size:12px;color:#000;letter-spacing:0.3px;">Sun Aug  1 10</div><div class="a" style="left:288px;top:401px;width:9px;height:1px;border-top:1px dotted #606060;"></div><svg class="a" style="left:297px;top:394px;" width="17" height="16" viewBox="0 0 17 16"><path d="M0.8 7.5L9.2 0.8L12.5 2.5L11.8 3.5L15.8 7L7.8 14.5Z" fill="#f4f0b8" stroke="#000" stroke-width="1.1" stroke-linejoin="round"/><path d="M2.5 9L10 2.8M4 10.5L11.5 4.3" stroke="#000" stroke-width="0.9"/><path d="M6 11l5-4.5M7.5 12.2l5-4.5" stroke="#c8c060" stroke-width="0.8"/></svg><div class="t" style="left:314px;top:395px;font-size:12px;color:#000;text-decoration:underline;letter-spacing:0.1px;">khelpview.h</div><div class="t" style="left:422px;top:395px;font-size:12px;color:#000;letter-spacing:0.2px;">File</div><div class="t" style="left:475px;top:395px;font-size:12px;color:#000;letter-spacing:0.2px;">5521</div><div class="t" style="left:526px;top:395px;font-size:12px;color:#000;letter-spacing:0.3px;">Wed Jul 21 12</div><div class="a" style="left:288px;top:419px;width:9px;height:1px;border-top:1px dotted #606060;"></div><svg class="a" style="left:297px;top:412px;" width="17" height="16" viewBox="0 0 17 16"><path d="M0.8 7.5L9.2 0.8L12.5 2.5L11.8 3.5L15.8 7L7.8 14.5Z" fill="#f4f0b8" stroke="#000" stroke-width="1.1" stroke-linejoin="round"/><path d="M2.5 9L10 2.8M4 10.5L11.5 4.3" stroke="#000" stroke-width="0.9"/><path d="M6 11l5-4.5M7.5 12.2l5-4.5" stroke="#c8c060" stroke-width="0.8"/></svg><div class="t" style="left:314px;top:413px;font-size:12px;color:#000;text-decoration:underline;letter-spacing:0.1px;">khelpview.cpp</div><div class="t" style="left:422px;top:413px;font-size:12px;color:#000;letter-spacing:0.2px;">File</div><div class="t" style="left:475px;top:413px;font-size:12px;color:#000;letter-spacing:0.2px;">22726</div><div class="t" style="left:526px;top:413px;font-size:12px;color:#000;letter-spacing:0.3px;">Wed Jul 21 12</div><div class="a" style="left:288px;top:437px;width:9px;height:1px;border-top:1px dotted #606060;"></div><svg class="a" style="left:297px;top:430px;" width="17" height="16" viewBox="0 0 17 16"><path d="M0.8 7.5L9.2 0.8L12.5 2.5L11.8 3.5L15.8 7L7.8 14.5Z" fill="#f4f0b8" stroke="#000" stroke-width="1.1" stroke-linejoin="round"/><path d="M2.5 9L10 2.8M4 10.5L11.5 4.3" stroke="#000" stroke-width="0.9"/><path d="M6 11l5-4.5M7.5 12.2l5-4.5" stroke="#c8c060" stroke-width="0.8"/></svg><div class="t" style="left:314px;top:431px;font-size:12px;color:#000;text-decoration:underline;letter-spacing:0.1px;">das-q.mp3</div><div class="t" style="left:422px;top:431px;font-size:12px;color:#000;letter-spacing:0.2px;">File</div><div class="t" style="left:475px;top:431px;font-size:12px;color:#000;letter-spacing:0.2px;">798086</div><div class="t" style="left:526px;top:431px;font-size:12px;color:#000;letter-spacing:0.3px;">Wed Jul 21 21</div><div class="a" style="left:288px;top:455px;width:9px;height:1px;border-top:1px dotted #606060;"></div><svg class="a" style="left:297px;top:448px;" width="17" height="16" viewBox="0 0 17 16"><path d="M0.8 7.5L9.2 0.8L12.5 2.5L11.8 3.5L15.8 7L7.8 14.5Z" fill="#f4f0b8" stroke="#000" stroke-width="1.1" stroke-linejoin="round"/><path d="M2.5 9L10 2.8M4 10.5L11.5 4.3" stroke="#000" stroke-width="0.9"/><path d="M6 11l5-4.5M7.5 12.2l5-4.5" stroke="#c8c060" stroke-width="0.8"/></svg><div class="t" style="left:314px;top:449px;font-size:12px;color:#000;text-decoration:underline;letter-spacing:0.1px;">das-p.mp3</div><div class="t" style="left:422px;top:449px;font-size:12px;color:#000;letter-spacing:0.2px;">File</div><div class="t" style="left:475px;top:449px;font-size:12px;color:#000;letter-spacing:0.2px;">842806</div><div class="t" style="left:526px;top:449px;font-size:12px;color:#000;letter-spacing:0.3px;">Wed Jul 21 21</div><div class="a" style="left:288px;top:473px;width:9px;height:1px;border-top:1px dotted #606060;"></div><svg class="a" style="left:297px;top:466px;" width="17" height="16" viewBox="0 0 17 16"><path d="M0.8 7.5L9.2 0.8L12.5 2.5L11.8 3.5L15.8 7L7.8 14.5Z" fill="#f4f0b8" stroke="#000" stroke-width="1.1" stroke-linejoin="round"/><path d="M2.5 9L10 2.8M4 10.5L11.5 4.3" stroke="#000" stroke-width="0.9"/><path d="M6 11l5-4.5M7.5 12.2l5-4.5" stroke="#c8c060" stroke-width="0.8"/></svg><div class="t" style="left:314px;top:467px;font-size:12px;color:#000;text-decoration:underline;letter-spacing:0.1px;">das-o.mp3</div><div class="t" style="left:422px;top:467px;font-size:12px;color:#000;letter-spacing:0.2px;">File</div><div class="t" style="left:475px;top:467px;font-size:12px;color:#000;letter-spacing:0.2px;">416198</div><div class="t" style="left:526px;top:467px;font-size:12px;color:#000;letter-spacing:0.3px;">Wed Jul 21 21</div><div class="a" style="left:288px;top:491px;width:9px;height:1px;border-top:1px dotted #606060;"></div><svg class="a" style="left:297px;top:484px;" width="17" height="16" viewBox="0 0 17 16"><path d="M0.8 7.5L9.2 0.8L12.5 2.5L11.8 3.5L15.8 7L7.8 14.5Z" fill="#f4f0b8" stroke="#000" stroke-width="1.1" stroke-linejoin="round"/><path d="M2.5 9L10 2.8M4 10.5L11.5 4.3" stroke="#000" stroke-width="0.9"/><path d="M6 11l5-4.5M7.5 12.2l5-4.5" stroke="#c8c060" stroke-width="0.8"/></svg><div class="t" style="left:314px;top:485px;font-size:12px;color:#000;text-decoration:underline;letter-spacing:0.1px;">das-g.mp3</div><div class="t" style="left:422px;top:485px;font-size:12px;color:#000;letter-spacing:0.2px;">File</div><div class="t" style="left:475px;top:485px;font-size:12px;color:#000;letter-spacing:0.2px;">467990</div><div class="t" style="left:526px;top:485px;font-size:12px;color:#000;letter-spacing:0.3px;">Wed Jul 21 21</div><div class="a" style="left:288px;top:509px;width:9px;height:1px;border-top:1px dotted #606060;"></div><svg class="a" style="left:297px;top:502px;" width="17" height="16" viewBox="0 0 17 16"><path d="M0.8 7.5L9.2 0.8L12.5 2.5L11.8 3.5L15.8 7L7.8 14.5Z" fill="#f4f0b8" stroke="#000" stroke-width="1.1" stroke-linejoin="round"/><path d="M2.5 9L10 2.8M4 10.5L11.5 4.3" stroke="#000" stroke-width="0.9"/><path d="M6 11l5-4.5M7.5 12.2l5-4.5" stroke="#c8c060" stroke-width="0.8"/></svg><div class="t" style="left:314px;top:503px;font-size:12px;color:#000;text-decoration:underline;letter-spacing:0.1px;">das-b.mp3</div><div class="t" style="left:422px;top:503px;font-size:12px;color:#000;letter-spacing:0.2px;">File</div><div class="t" style="left:475px;top:503px;font-size:12px;color:#000;letter-spacing:0.2px;">916832</div><div class="t" style="left:526px;top:503px;font-size:12px;color:#000;letter-spacing:0.3px;">Wed Jul 21 21</div><div class="a" style="left:288px;top:527px;width:9px;height:1px;border-top:1px dotted #606060;"></div><svg class="a" style="left:297px;top:520px;" width="17" height="16" viewBox="0 0 17 16"><path d="M0.8 7.5L9.2 0.8L12.5 2.5L11.8 3.5L15.8 7L7.8 14.5Z" fill="#f4f0b8" stroke="#000" stroke-width="1.1" stroke-linejoin="round"/><path d="M2.5 9L10 2.8M4 10.5L11.5 4.3" stroke="#000" stroke-width="0.9"/><path d="M6 11l5-4.5M7.5 12.2l5-4.5" stroke="#c8c060" stroke-width="0.8"/></svg><div class="t" style="left:314px;top:521px;font-size:12px;color:#000;text-decoration:underline;letter-spacing:0.1px;">das-a.mp3</div><div class="t" style="left:422px;top:521px;font-size:12px;color:#000;letter-spacing:0.2px;">File</div><div class="t" style="left:475px;top:521px;font-size:12px;color:#000;letter-spacing:0.2px;">559822</div><div class="t" style="left:526px;top:521px;font-size:12px;color:#000;letter-spacing:0.3px;">Wed Jul 21 21</div><div class="a" style="left:288px;top:545px;width:9px;height:1px;border-top:1px dotted #606060;"></div><svg class="a" style="left:297px;top:538px;" width="17" height="16" viewBox="0 0 17 16"><path d="M0.8 7.5L9.2 0.8L12.5 2.5L11.8 3.5L15.8 7L7.8 14.5Z" fill="#f4f0b8" stroke="#000" stroke-width="1.1" stroke-linejoin="round"/><path d="M2.5 9L10 2.8M4 10.5L11.5 4.3" stroke="#000" stroke-width="0.9"/><path d="M6 11l5-4.5M7.5 12.2l5-4.5" stroke="#c8c060" stroke-width="0.8"/></svg><div class="t" style="left:314px;top:539px;font-size:12px;color:#000;text-decoration:underline;letter-spacing:0.1px;">party2.pl</div><div class="t" style="left:422px;top:539px;font-size:12px;color:#000;letter-spacing:0.2px;">File</div><div class="t" style="left:475px;top:539px;font-size:12px;color:#000;letter-spacing:0.2px;">5812</div><div class="t" style="left:526px;top:539px;font-size:12px;color:#000;letter-spacing:0.3px;">Sat Jul 17 20:</div><div class="a" style="left:288px;top:563px;width:9px;height:1px;border-top:1px dotted #606060;"></div><svg class="a" style="left:297px;top:556px;" width="17" height="16" viewBox="0 0 17 16"><path d="M0.8 7.5L9.2 0.8L12.5 2.5L11.8 3.5L15.8 7L7.8 14.5Z" fill="#f4f0b8" stroke="#000" stroke-width="1.1" stroke-linejoin="round"/><path d="M2.5 9L10 2.8M4 10.5L11.5 4.3" stroke="#000" stroke-width="0.9"/><path d="M6 11l5-4.5M7.5 12.2l5-4.5" stroke="#c8c060" stroke-width="0.8"/></svg><div class="t" style="left:314px;top:557px;font-size:12px;color:#000;text-decoration:underline;letter-spacing:0.1px;">sirtaj.mp3</div><div class="t" style="left:422px;top:557px;font-size:12px;color:#000;letter-spacing:0.2px;">File</div><div class="t" style="left:475px;top:557px;font-size:12px;color:#000;letter-spacing:0.2px;">103539</div><div class="t" style="left:526px;top:557px;font-size:12px;color:#000;letter-spacing:0.3px;">Mon Jul 12 16</div><div class="a" style="left:288px;top:581px;width:9px;height:1px;border-top:1px dotted #606060;"></div><svg class="a" style="left:297px;top:574px;" width="17" height="16" viewBox="0 0 17 16"><path d="M0.8 7.5L9.2 0.8L12.5 2.5L11.8 3.5L15.8 7L7.8 14.5Z" fill="#f4f0b8" stroke="#000" stroke-width="1.1" stroke-linejoin="round"/><path d="M2.5 9L10 2.8M4 10.5L11.5 4.3" stroke="#000" stroke-width="0.9"/><path d="M6 11l5-4.5M7.5 12.2l5-4.5" stroke="#c8c060" stroke-width="0.8"/></svg><div class="t" style="left:314px;top:575px;font-size:12px;color:#000;text-decoration:underline;letter-spacing:0.1px;">RLkonqi2.jpg</div><div class="t" style="left:422px;top:575px;font-size:12px;color:#000;letter-spacing:0.2px;">File</div><div class="t" style="left:475px;top:575px;font-size:12px;color:#000;letter-spacing:0.2px;">39299</div><div class="t" style="left:526px;top:575px;font-size:12px;color:#000;letter-spacing:0.3px;">Tue Jul  6 15:</div><div class="a" style="left:288px;top:599px;width:9px;height:1px;border-top:1px dotted #606060;"></div><svg class="a" style="left:297px;top:592px;" width="17" height="16" viewBox="0 0 17 16"><path d="M0.8 7.5L9.2 0.8L12.5 2.5L11.8 3.5L15.8 7L7.8 14.5Z" fill="#f4f0b8" stroke="#000" stroke-width="1.1" stroke-linejoin="round"/><path d="M2.5 9L10 2.8M4 10.5L11.5 4.3" stroke="#000" stroke-width="0.9"/><path d="M6 11l5-4.5M7.5 12.2l5-4.5" stroke="#c8c060" stroke-width="0.8"/></svg><div class="t" style="left:314px;top:593px;font-size:12px;color:#000;text-decoration:underline;letter-spacing:0.1px;">CDs.txt</div><div class="t" style="left:422px;top:593px;font-size:12px;color:#000;letter-spacing:0.2px;">File</div><div class="t" style="left:475px;top:593px;font-size:12px;color:#000;letter-spacing:0.2px;">5454</div><div class="t" style="left:526px;top:593px;font-size:12px;color:#000;letter-spacing:0.3px;">Mon Jun 28 2</div><div class="a" style="left:288px;top:617px;width:9px;height:1px;border-top:1px dotted #606060;"></div><svg class="a" style="left:297px;top:610px;" width="17" height="16" viewBox="0 0 17 16"><path d="M0.8 7.5L9.2 0.8L12.5 2.5L11.8 3.5L15.8 7L7.8 14.5Z" fill="#f4f0b8" stroke="#000" stroke-width="1.1" stroke-linejoin="round"/><path d="M2.5 9L10 2.8M4 10.5L11.5 4.3" stroke="#000" stroke-width="0.9"/><path d="M6 11l5-4.5M7.5 12.2l5-4.5" stroke="#c8c060" stroke-width="0.8"/></svg><div class="t" style="left:314px;top:611px;font-size:12px;color:#000;text-decoration:underline;letter-spacing:0.1px;">party.pl</div><div class="t" style="left:422px;top:611px;font-size:12px;color:#000;letter-spacing:0.2px;">File</div><div class="t" style="left:475px;top:611px;font-size:12px;color:#000;letter-spacing:0.2px;">2624</div><div class="t" style="left:526px;top:611px;font-size:12px;color:#000;letter-spacing:0.3px;">Thu Jun 24 01</div><div class="a" style="left:288px;top:635px;width:9px;height:1px;border-top:1px dotted #606060;"></div><svg class="a" style="left:297px;top:628px;" width="17" height="16" viewBox="0 0 17 16"><path d="M0.8 7.5L9.2 0.8L12.5 2.5L11.8 3.5L15.8 7L7.8 14.5Z" fill="#f4f0b8" stroke="#000" stroke-width="1.1" stroke-linejoin="round"/><path d="M2.5 9L10 2.8M4 10.5L11.5 4.3" stroke="#000" stroke-width="0.9"/><path d="M6 11l5-4.5M7.5 12.2l5-4.5" stroke="#c8c060" stroke-width="0.8"/></svg><div class="t" style="left:314px;top:629px;font-size:12px;color:#000;text-decoration:underline;letter-spacing:0.1px;">kimageshop_gui.txt</div><div class="t" style="left:422px;top:629px;font-size:12px;color:#000;letter-spacing:0.2px;">File</div><div class="t" style="left:475px;top:629px;font-size:12px;color:#000;letter-spacing:0.2px;">1770</div><div class="t" style="left:526px;top:629px;font-size:12px;color:#000;letter-spacing:0.3px;">Sun Jun  6 14</div><div class="a" style="left:288px;top:653px;width:9px;height:1px;border-top:1px dotted #606060;"></div><svg class="a" style="left:297px;top:646px;" width="17" height="16" viewBox="0 0 17 16"><path d="M0.8 7.5L9.2 0.8L12.5 2.5L11.8 3.5L15.8 7L7.8 14.5Z" fill="#f4f0b8" stroke="#000" stroke-width="1.1" stroke-linejoin="round"/><path d="M2.5 9L10 2.8M4 10.5L11.5 4.3" stroke="#000" stroke-width="0.9"/><path d="M6 11l5-4.5M7.5 12.2l5-4.5" stroke="#c8c060" stroke-width="0.8"/></svg><div class="t" style="left:314px;top:647px;font-size:12px;color:#000;text-decoration:underline;letter-spacing:0.1px;">kimageshop.idl</div><div class="t" style="left:422px;top:647px;font-size:12px;color:#000;letter-spacing:0.2px;">File</div><div class="t" style="left:475px;top:647px;font-size:12px;color:#000;letter-spacing:0.2px;">2574</div><div class="t" style="left:526px;top:647px;font-size:12px;color:#000;letter-spacing:0.3px;">Mon May 31 1</div><div class="a" style="left:288px;top:671px;width:9px;height:1px;border-top:1px dotted #606060;"></div><svg class="a" style="left:297px;top:664px;" width="17" height="16" viewBox="0 0 17 16"><path d="M0.8 7.5L9.2 0.8L12.5 2.5L11.8 3.5L15.8 7L7.8 14.5Z" fill="#f4f0b8" stroke="#000" stroke-width="1.1" stroke-linejoin="round"/><path d="M2.5 9L10 2.8M4 10.5L11.5 4.3" stroke="#000" stroke-width="0.9"/><path d="M6 11l5-4.5M7.5 12.2l5-4.5" stroke="#c8c060" stroke-width="0.8"/></svg><div class="t" style="left:314px;top:665px;font-size:12px;color:#000;text-decoration:underline;letter-spacing:0.1px;">kimageshop.design</div><div class="t" style="left:422px;top:665px;font-size:12px;color:#000;letter-spacing:0.2px;">File</div><div class="t" style="left:475px;top:665px;font-size:12px;color:#000;letter-spacing:0.2px;">3011</div><div class="t" style="left:526px;top:665px;font-size:12px;color:#000;letter-spacing:0.3px;">Tue Jun  1 15</div><div class="a" style="left:288px;top:689px;width:9px;height:1px;border-top:1px dotted #606060;"></div><svg class="a" style="left:297px;top:682px;" width="17" height="16" viewBox="0 0 17 16"><path d="M0.8 7.5L9.2 0.8L12.5 2.5L11.8 3.5L15.8 7L7.8 14.5Z" fill="#f4f0b8" stroke="#000" stroke-width="1.1" stroke-linejoin="round"/><path d="M2.5 9L10 2.8M4 10.5L11.5 4.3" stroke="#000" stroke-width="0.9"/><path d="M6 11l5-4.5M7.5 12.2l5-4.5" stroke="#c8c060" stroke-width="0.8"/></svg><div class="t" style="left:314px;top:683px;font-size:12px;color:#000;text-decoration:underline;letter-spacing:0.1px;">Zapp_MP3.TXT</div><div class="t" style="left:422px;top:683px;font-size:12px;color:#000;letter-spacing:0.2px;">File</div><div class="t" style="left:475px;top:683px;font-size:12px;color:#000;letter-spacing:0.2px;">853030</div><div class="t" style="left:526px;top:683px;font-size:12px;color:#000;letter-spacing:0.3px;">Tue May 25 0</div><div class="a" style="left:288px;top:707px;width:9px;height:1px;border-top:1px dotted #606060;"></div><svg class="a" style="left:297px;top:700px;" width="17" height="16" viewBox="0 0 17 16"><path d="M0.8 7.5L9.2 0.8L12.5 2.5L11.8 3.5L15.8 7L7.8 14.5Z" fill="#f4f0b8" stroke="#000" stroke-width="1.1" stroke-linejoin="round"/><path d="M2.5 9L10 2.8M4 10.5L11.5 4.3" stroke="#000" stroke-width="0.9"/><path d="M6 11l5-4.5M7.5 12.2l5-4.5" stroke="#c8c060" stroke-width="0.8"/></svg><div class="t" style="left:314px;top:701px;font-size:12px;color:#000;text-decoration:underline;letter-spacing:0.1px;">RLkonqi1.jpg</div><div class="t" style="left:422px;top:701px;font-size:12px;color:#000;letter-spacing:0.2px;">File</div><div class="t" style="left:475px;top:701px;font-size:12px;color:#000;letter-spacing:0.2px;">34441</div><div class="t" style="left:526px;top:701px;font-size:12px;color:#000;letter-spacing:0.3px;">Tue Jul  6 15:</div><div class="a" style="left:288px;top:725px;width:9px;height:1px;border-top:1px dotted #606060;"></div><svg class="a" style="left:297px;top:718px;" width="17" height="16" viewBox="0 0 17 16"><path d="M0.8 7.5L9.2 0.8L12.5 2.5L11.8 3.5L15.8 7L7.8 14.5Z" fill="#f4f0b8" stroke="#000" stroke-width="1.1" stroke-linejoin="round"/><path d="M2.5 9L10 2.8M4 10.5L11.5 4.3" stroke="#000" stroke-width="0.9"/><path d="M6 11l5-4.5M7.5 12.2l5-4.5" stroke="#c8c060" stroke-width="0.8"/><path d="M0 4l3 2l-1 2M12 14l3-1l1 2" stroke="#b01818" stroke-width="1.6" fill="none"/></svg><div class="t" style="left:314px;top:719px;font-size:12px;color:#000;text-decoration:underline;letter-spacing:0.1px;">khelpcenter.tar.gz</div><div class="t" style="left:422px;top:719px;font-size:12px;color:#000;letter-spacing:0.2px;">File</div><div class="t" style="left:475px;top:719px;font-size:12px;color:#000;letter-spacing:0.2px;">296484</div><div class="t" style="left:526px;top:719px;font-size:12px;color:#000;letter-spacing:0.3px;">Fri Jun 11 21:</div><div class="a" style="left:288px;top:743px;width:9px;height:1px;border-top:1px dotted #606060;"></div><svg class="a" style="left:297px;top:736px;" width="17" height="16" viewBox="0 0 17 16"><path d="M0.8 7.5L9.2 0.8L12.5 2.5L11.8 3.5L15.8 7L7.8 14.5Z" fill="#f4f0b8" stroke="#000" stroke-width="1.1" stroke-linejoin="round"/><path d="M2.5 9L10 2.8M4 10.5L11.5 4.3" stroke="#000" stroke-width="0.9"/><path d="M6 11l5-4.5M7.5 12.2l5-4.5" stroke="#c8c060" stroke-width="0.8"/></svg><div class="t" style="left:314px;top:737px;font-size:12px;color:#000;text-decoration:underline;letter-spacing:0.1px;">nda.rtf</div><div class="t" style="left:422px;top:737px;font-size:12px;color:#000;letter-spacing:0.2px;">File</div><div class="t" style="left:475px;top:737px;font-size:12px;color:#000;letter-spacing:0.2px;">16099</div><div class="t" style="left:526px;top:737px;font-size:12px;color:#000;letter-spacing:0.3px;">Fri Jul  2 18:1</div></div><div class="a" style="left:605px;top:245px;width:16px;height:499px;background:#101010;"></div><div class="a" style="left:605px;top:245px;width:15px;height:15px;background:#d4d0cc;"></div><svg class="a" style="left:605px;top:245px;" width="15" height="15" viewBox="0 0 15 15"><path d="M7.5 3L12 12H3z" fill="#e8a050" stroke="#806040" stroke-width=".8"/></svg><div class="a" style="left:605px;top:260px;width:15px;height:193px;background:#242424;"></div><svg class="a" style="left:605px;top:260px;" width="15" height="193" viewBox="0 0 15 193"><path d="M3.0 177.4 Q-6.4 195.8 -7.7 214.2" stroke="rgba(255,255,255,0.40)" stroke-width="0.7" fill="none"/><path d="M10.3 131.3 Q11.0 147.7 8.4 164.1" stroke="rgba(255,255,255,0.35)" stroke-width="0.7" fill="none"/><path d="M13.5 -6.8 Q5.3 2.8 5.2 12.4" stroke="rgba(255,255,255,0.17)" stroke-width="1.1" fill="none"/><path d="M1.8 17.7 Q-0.4 24.8 -1.7 31.9" stroke="rgba(255,255,255,0.31)" stroke-width="1.1" fill="none"/><path d="M7.5 66.1 Q3.5 78.4 3.9 90.7" stroke="rgba(255,255,255,0.33)" stroke-width="0.8" fill="none"/><path d="M8.3 4.1 Q9.1 16.4 11.9 28.7" stroke="rgba(255,255,255,0.40)" stroke-width="0.6" fill="none"/><path d="M8.7 186.6 Q3.4 204.6 -0.1 222.5" stroke="rgba(255,255,255,0.43)" stroke-width="0.5" fill="none"/><path d="M9.3 72.8 Q4.7 84.8 -3.4 96.8" stroke="rgba(255,255,255,0.17)" stroke-width="0.8" fill="none"/><path d="M9.6 188.8 Q10.5 206.8 5.6 224.7" stroke="rgba(255,255,255,0.21)" stroke-width="1.1" fill="none"/><path d="M9.7 -1.6 Q11.5 16.8 21.2 35.2" stroke="rgba(255,255,255,0.25)" stroke-width="0.7" fill="none"/><path d="M0.9 43.7 Q5.1 55.6 15.4 67.6" stroke="rgba(255,255,255,0.38)" stroke-width="0.8" fill="none"/><path d="M8.0 2.6 Q10.1 11.0 20.5 19.3" stroke="rgba(255,255,255,0.18)" stroke-width="0.8" fill="none"/><path d="M6.3 189.1 Q7.3 205.0 12.8 220.9" stroke="rgba(255,255,255,0.31)" stroke-width="1.0" fill="none"/><path d="M6.5 55.1 Q6.1 70.7 6.8 86.3" stroke="rgba(255,255,255,0.31)" stroke-width="0.8" fill="none"/><path d="M11.5 -7.7 Q11.6 -1.8 18.5 4.0" stroke="rgba(255,255,255,0.31)" stroke-width="1.0" fill="none"/><path d="M14.4 171.3 Q13.2 190.3 9.4 209.3" stroke="rgba(255,255,255,0.34)" stroke-width="1.1" fill="none"/></svg><div class="a" style="left:605px;top:453px;width:15px;height:275px;background:#d6d6d6;border:1px solid #101010;box-shadow:inset 1px 1px 0 #f0f0f0, inset -1px -1px 0 #909090;"></div><div class="a" style="left:605px;top:729px;width:15px;height:15px;background:#d4d0cc;"></div><svg class="a" style="left:605px;top:729px;" width="15" height="15" viewBox="0 0 15 15"><path d="M7.5 12L12 3H3z" fill="#e8a050" stroke="#806040" stroke-width=".8"/></svg><div class="a" style="left:277px;top:744px;width:344px;height:16px;background:#101010;"></div><div class="a" style="left:277px;top:744px;width:15px;height:15px;background:#d4d0cc;"></div><svg class="a" style="left:277px;top:744px;" width="15" height="15" viewBox="0 0 15 15"><path d="M3 7.5L12 3V12z" fill="#e8a050" stroke="#806040" stroke-width=".8"/></svg><div class="a" style="left:292px;top:744px;width:161px;height:15px;background:#d6d6d6;border:1px solid #101010;box-shadow:inset 1px 1px 0 #f0f0f0, inset -1px -1px 0 #909090;"></div><div class="a" style="left:453px;top:744px;width:137px;height:15px;background:#242424;"></div><svg class="a" style="left:453px;top:744px;" width="137" height="15" viewBox="0 0 137 15"><path d="M51.6 -2.1 Q1.5 16.9 -42.2 36.0" stroke="rgba(255,255,255,0.38)" stroke-width="0.8" fill="none"/><path d="M40.0 -7.6 Q39.8 6.2 42.3 19.9" stroke="rgba(255,255,255,0.32)" stroke-width="0.8" fill="none"/></svg><div class="a" style="left:590px;top:744px;width:15px;height:15px;background:#d4d0cc;"></div><svg class="a" style="left:590px;top:744px;" width="15" height="15" viewBox="0 0 15 15"><path d="M12 7.5L3 3V12z" fill="#e8a050" stroke="#806040" stroke-width=".8"/></svg><div class="a" style="left:605px;top:744px;width:16px;height:16px;background:#c8c8c8;"></div><div class="a" style="left:621px;top:233px;width:6px;height:527px;background:#c4c4c4;border-left:1px solid #808080;"></div><div class="a" style="left:622px;top:233px;width:3px;height:527px;background:#f0f0f0;"></div><div class="a" style="left:626px;top:233px;width:1px;height:527px;background:#101010;"></div><div class="a" style="left:627px;top:234px;width:520px;height:11px;background:linear-gradient(to bottom,rgba(0,0,0,0.3) 0%,rgba(0,0,0,0) 30%,rgba(255,255,255,0.2) 50%,rgba(0,0,0,0) 70%,rgba(0,0,0,0.35) 100%),linear-gradient(to right,#10163a 0%,#4a58a8 22%,#7a8ad8 45%,#5a68b8 75%,#0c1020 100%)"></div><div class="a" style="left:627px;top:245px;width:504px;height:515px;background:#fff;"></div><svg class="a" style="left:627px;top:245px;" width="504" height="515" viewBox="0 0 504 515"><defs>
<linearGradient id="fface" x1="0" y1="0" x2="1" y2="1"><stop offset="0" stop-color="#fafafa"/><stop offset="0.5" stop-color="#d8d8dc"/><stop offset="1" stop-color="#8c8c94"/></linearGradient>
<linearGradient id="paper" x1="0" y1="0" x2="1" y2="1"><stop offset="0" stop-color="#fffbd0"/><stop offset="1" stop-color="#e8dc70"/></linearGradient>
<linearGradient id="pic" x1="0" y1="0" x2="1" y2="0"><stop offset="0" stop-color="#f0d0d8"/><stop offset="0.35" stop-color="#a8a8b0"/><stop offset="0.6" stop-color="#5060b0"/><stop offset="1" stop-color="#206030"/></linearGradient>
<linearGradient id="cone" x1="0" y1="0" x2="0.3" y2="1"><stop offset="0" stop-color="#40e0e0"/><stop offset="0.45" stop-color="#10a0a8"/><stop offset="1" stop-color="#005060"/></linearGradient>
<linearGradient id="disc" x1="0" y1="0" x2="1" y2="0.2"><stop offset="0" stop-color="#505868"/><stop offset="0.35" stop-color="#c8c8d0"/><stop offset="0.6" stop-color="#ffffff"/><stop offset="1" stop-color="#b0b0b0"/></linearGradient>
<symbol id="i-fold" viewBox="0 0 50 50">
<path d="M36 36L45.5 40.5L41 46L36 45z" fill="#000"/>
<path d="M7.5 9L35 19.5L35.5 46L7.5 32z" fill="url(#fface)" stroke="#000" stroke-width="1.4"/>
<path d="M7 9.5L10.5 6L13.5 5.8L23 10L27 10.2L31 11.8L37 15.5L39 19L39 44L36 46.5L35.5 46L35.2 19.8L31 17L26 15.5L10 10z" fill="#e8b070" stroke="#000" stroke-width="1.3" stroke-linejoin="round"/>
</symbol>
<symbol id="i-paper" viewBox="0 0 50 50">
<path d="M44 31L47 34L38 48L34 47z" fill="#000"/>
<path d="M21 4.5L46.5 12.5L44 32L35 46.5L3.5 35.5L14 19z" fill="url(#paper)" stroke="#000" stroke-width="1.4" stroke-linejoin="round"/>
</symbol>
<symbol id="i-pencil" viewBox="0 0 50 50">
<use href="#i-paper" width="50" height="50"/>
<path d="M14 28l16 6M17 24l20 7M20 20l20 7M23 16l18 6M12 32l12 4" stroke="#c8b860" stroke-width="1.4"/>
<path d="M10.5 8.5L14.5 6L31 37L30 40.5L27 38.5z" fill="#e07028" stroke="#000" stroke-width="1.3" stroke-linejoin="round"/>
<path d="M12 8L15 6.5" stroke="#f0d0c0" stroke-width="1.5"/>
</symbol>
<symbol id="i-image" viewBox="0 0 50 50">
<use href="#i-paper" width="50" height="50"/>
<rect x="9" y="11.5" width="26.5" height="18.5" rx="1.5" fill="url(#pic)" stroke="#000" stroke-width="1.5"/>
<path d="M10 12.5h8l-3 4.5l-1.5 12h-1.5l-0.5-10z" fill="#e01010"/>
<path d="M19 12.5h8v16h-2l-1-9l-2 3z" fill="#4050d0" opacity=".85"/>
<path d="M27 12.5h8v15l-3-8z" fill="#108020" opacity=".85"/>
</symbol>
<symbol id="i-sound" viewBox="0 0 50 50">
<use href="#i-paper" width="50" height="50"/>
<path d="M14 25L28.5 11.2L30 40.8z" fill="url(#cone)"/>
<ellipse cx="29.2" cy="26" rx="4.8" ry="14.6" fill="url(#disc)" transform="rotate(-4 29.2 26)"/>
<path d="M14.5 25L28 12" stroke="#a0f8f8" stroke-width="0.8"/>
</symbol>
<symbol id="i-pkg" viewBox="0 0 50 50">
<path d="M5 41L40 30L47 34L35 46z" fill="#000"/>
<path d="M20 3.5L26 9.5L46.5 10.5L39 28L37 45L22 38L3.5 35L19 24z" fill="url(#paper)" stroke="#000" stroke-width="1.3" stroke-linejoin="round"/>
<path d="M28 10L23 38M20 24L40 28" stroke="#e03030" stroke-width="1.8"/>
</symbol>
<symbol id="i-small" viewBox="0 0 50 50">
<path d="M12.5 22.5L26 8.5L40 17L25.5 31z" fill="#101010"/>
<path d="M12.5 21L26 7.5L39.5 15.5L25.5 29z" fill="#f8f0a0" stroke="#000" stroke-width="1.2" stroke-linejoin="round"/>
<path d="M23 12l8 4.5M21 14l5 3" stroke="#a09040" stroke-width="0.8"/>
</symbol>
</defs><use href="#i-fold" x="23" y="3" width="50" height="50"/><use href="#i-fold" x="123" y="3" width="50" height="50"/><use href="#i-pencil" x="223" y="3" width="50" height="50"/><use href="#i-fold" x="323" y="3" width="50" height="50"/><use href="#i-fold" x="423" y="3" width="50" height="50"/><use href="#i-fold" x="23" y="71" width="50" height="50"/><use href="#i-fold" x="123" y="71" width="50" height="50"/><use href="#i-fold" x="223" y="71" width="50" height="50"/><use href="#i-fold" x="323" y="71" width="50" height="50"/><use href="#i-fold" x="423" y="71" width="50" height="50"/><use href="#i-pkg" x="23" y="139" width="50" height="50"/><use href="#i-image" x="123" y="139" width="50" height="50"/><use href="#i-fold" x="223" y="139" width="50" height="50"/><use href="#i-fold" x="323" y="139" width="50" height="50"/><use href="#i-fold" x="423" y="139" width="50" height="50"/><use href="#i-pencil" x="23" y="222" width="50" height="50"/><use href="#i-pencil" x="123" y="222" width="50" height="50"/><use href="#i-pencil" x="223" y="222" width="50" height="50"/><use href="#i-pencil" x="323" y="222" width="50" height="50"/><use href="#i-pencil" x="423" y="222" width="50" height="50"/><use href="#i-pencil" x="23" y="305" width="50" height="50"/><use href="#i-image" x="123" y="305" width="50" height="50"/><use href="#i-sound" x="223" y="305" width="50" height="50"/><use href="#i-pencil" x="323" y="305" width="50" height="50"/><use href="#i-sound" x="423" y="305" width="50" height="50"/><use href="#i-sound" x="23" y="373" width="50" height="50"/><use href="#i-sound" x="123" y="373" width="50" height="50"/><use href="#i-sound" x="223" y="373" width="50" height="50"/><use href="#i-sound" x="323" y="373" width="50" height="50"/><use href="#i-fold" x="423" y="373" width="50" height="50"/><use href="#i-sound" x="23" y="441" width="50" height="50"/><use href="#i-small" x="123" y="441" width="50" height="50"/><text x="146" y="466" font-family="Liberation Sans" font-weight="bold" font-size="10" fill="#101878" transform="rotate(-28 148 462)">c</text><use href="#i-small" x="223" y="441" width="50" height="50"/><text x="246" y="466" font-family="Liberation Sans" font-weight="bold" font-size="10" fill="#e02010" transform="rotate(-28 248 462)">h</text><use href="#i-image" x="323" y="441" width="50" height="50"/><use href="#i-image" x="423" y="441" width="50" height="50"/></svg><div class="t" style="left:615px;top:302px;width:120px;text-align:center;color:#c0141c;"><span style="text-decoration:underline;letter-spacing:0.15px">Texte</span></div><div class="t" style="left:715px;top:302px;width:120px;text-align:center;color:#c0141c;"><span style="text-decoration:underline;letter-spacing:0.15px">wm</span></div><div class="t" style="left:815px;top:302px;width:120px;text-align:center;color:#c0141c;"><span style="text-decoration:underline;letter-spacing:0.15px">nda.rtf</span></div><div class="t" style="left:915px;top:302px;width:120px;text-align:center;color:#c0141c;"><span style="text-decoration:underline;letter-spacing:0.15px">pgp</span></div><div class="t" style="left:1015px;top:302px;width:120px;text-align:center;color:#c0141c;"><span style="text-decoration:underline;letter-spacing:0.15px">apps</span></div><div class="t" style="left:615px;top:370px;width:120px;text-align:center;color:#c0141c;"><span style="text-decoration:underline;letter-spacing:0.15px">ttf</span></div><div class="t" style="left:715px;top:370px;width:120px;text-align:center;color:#c0141c;"><span style="text-decoration:underline;letter-spacing:0.15px">config</span></div><div class="t" style="left:815px;top:370px;width:120px;text-align:center;color:#c0141c;"><span style="text-decoration:underline;letter-spacing:0.15px">Bilder</span></div><div class="t" style="left:915px;top:370px;width:120px;text-align:center;color:#c0141c;"><span style="text-decoration:underline;letter-spacing:0.15px">uni</span></div><div class="t" style="left:1015px;top:370px;width:120px;text-align:center;color:#c0141c;"><span style="text-decoration:underline;letter-spacing:0.15px">Daten</span></div><div class="t" style="left:615px;top:438px;width:120px;text-align:center;color:#c0141c;"><span style="text-decoration:underline;letter-spacing:0.15px">khelpcenter.tar</span></div><div class="t" style="left:615px;top:454px;width:120px;text-align:center;color:#c0141c;"><span style="text-decoration:underline;letter-spacing:0.15px">.gz</span></div><div class="t" style="left:715px;top:438px;width:120px;text-align:center;color:#c0141c;"><span style="text-decoration:underline;letter-spacing:0.15px">RLkonqi1.jpg</span></div><div class="t" style="left:815px;top:438px;width:120px;text-align:center;color:#c0141c;"><span style="text-decoration:underline;letter-spacing:0.15px">win32</span></div><div class="t" style="left:915px;top:438px;width:120px;text-align:center;color:#c0141c;"><span style="text-decoration:underline;letter-spacing:0.15px">mail</span></div><div class="t" style="left:1015px;top:438px;width:120px;text-align:center;color:#c0141c;"><span style="text-decoration:underline;letter-spacing:0.15px">covers</span></div><div class="t" style="left:615px;top:521px;width:120px;text-align:center;color:#c0141c;"><span style="text-decoration:underline;letter-spacing:0.15px">Zapp_MP3.TXT</span></div><div class="t" style="left:715px;top:521px;width:120px;text-align:center;color:#c0141c;"><span style="text-decoration:underline;letter-spacing:0.15px">kimageshop</span></div><div class="t" style="left:715px;top:537px;width:120px;text-align:center;color:#c0141c;"><span style="text-decoration:underline;letter-spacing:0.15px">.design</span></div><div class="t" style="left:815px;top:521px;width:120px;text-align:center;color:#c0141c;"><span style="text-decoration:underline;letter-spacing:0.15px">kimageshop.idl</span></div><div class="t" style="left:915px;top:521px;width:120px;text-align:center;color:#c0141c;"><span style="text-decoration:underline;letter-spacing:0.15px">kimageshop_gui</span></div><div class="t" style="left:915px;top:537px;width:120px;text-align:center;color:#c0141c;"><span style="text-decoration:underline;letter-spacing:0.15px">.txt</span></div><div class="t" style="left:1015px;top:521px;width:120px;text-align:center;color:#c0141c;"><span style="text-decoration:underline;letter-spacing:0.15px">party.pl</span></div><div class="t" style="left:615px;top:604px;width:120px;text-align:center;color:#c0141c;"><span style="text-decoration:underline;letter-spacing:0.15px">CDs.txt</span></div><div class="t" style="left:715px;top:604px;width:120px;text-align:center;color:#c0141c;"><span style="text-decoration:underline;letter-spacing:0.15px">RLkonqi2.jpg</span></div><div class="t" style="left:815px;top:604px;width:120px;text-align:center;color:#c0141c;"><span style="text-decoration:underline;letter-spacing:0.15px">sirtaj.mp3</span></div><div class="t" style="left:915px;top:604px;width:120px;text-align:center;color:#c0141c;"><span style="text-decoration:underline;letter-spacing:0.15px">party2.pl</span></div><div class="t" style="left:1015px;top:604px;width:120px;text-align:center;color:#c0141c;"><span style="text-decoration:underline;letter-spacing:0.15px">das-a.mp3</span></div><div class="t" style="left:615px;top:672px;width:120px;text-align:center;color:#c0141c;"><span style="text-decoration:underline;letter-spacing:0.15px">das-b.mp3</span></div><div class="t" style="left:715px;top:672px;width:120px;text-align:center;color:#c0141c;"><span style="text-decoration:underline;letter-spacing:0.15px">das-g.mp3</span></div><div class="t" style="left:815px;top:672px;width:120px;text-align:center;color:#c0141c;"><span style="text-decoration:underline;letter-spacing:0.15px">das-o.mp3</span></div><div class="t" style="left:915px;top:672px;width:120px;text-align:center;color:#c0141c;"><span style="text-decoration:underline;letter-spacing:0.15px">das-p.mp3</span></div><div class="t" style="left:1015px;top:672px;width:120px;text-align:center;color:#c0141c;"><span style="text-decoration:underline;letter-spacing:0.15px">images</span></div><div class="t" style="left:615px;top:740px;width:120px;text-align:center;color:#c0141c;"><span style="text-decoration:underline;letter-spacing:0.15px">das-q.mp3</span></div><div class="t" style="left:715px;top:725px;width:120px;text-align:center;color:#c0141c;"><span style="text-decoration:underline;letter-spacing:0.15px">khelpview.cpp</span></div><div class="t" style="left:815px;top:725px;width:120px;text-align:center;color:#c0141c;"><span style="text-decoration:underline;letter-spacing:0.15px">khelpview.h</span></div><div class="t" style="left:915px;top:740px;width:120px;text-align:center;color:#c0141c;"><span style="text-decoration:underline;letter-spacing:0.15px">highcolor.png</span></div><div class="t" style="left:1015px;top:740px;width:120px;text-align:center;color:#c0141c;"><span style="text-decoration:underline;letter-spacing:0.15px">kwrite.gif</span></div><div class="a" style="left:1131px;top:245px;width:16px;height:515px;background:#101010;"></div><div class="a" style="left:1131px;top:245px;width:15px;height:15px;background:#d4d0cc;"></div><svg class="a" style="left:1131px;top:245px;" width="15" height="15" viewBox="0 0 15 15"><path d="M7.5 3L12 12H3z" fill="#e8a050" stroke="#806040" stroke-width=".8"/></svg><div class="a" style="left:1131px;top:260px;width:15px;height:425px;background:#d6d6d6;border:1px solid #101010;box-shadow:inset 1px 1px 0 #f0f0f0, inset -1px -1px 0 #909090;"></div><div class="a" style="left:1131px;top:685px;width:15px;height:59px;background:#242424;"></div><svg class="a" style="left:1131px;top:685px;" width="15" height="59" viewBox="0 0 15 59"><path d="M12.9 27.2 Q16.6 37.4 12.1 47.6" stroke="rgba(255,255,255,0.30)" stroke-width="0.9" fill="none"/><path d="M12.0 32.0 Q13.4 47.6 18.7 63.2" stroke="rgba(255,255,255,0.26)" stroke-width="0.8" fill="none"/><path d="M7.8 3.2 Q9.8 16.6 7.2 30.1" stroke="rgba(255,255,255,0.16)" stroke-width="0.9" fill="none"/><path d="M10.1 16.8 Q15.2 23.0 15.3 29.2" stroke="rgba(255,255,255,0.25)" stroke-width="1.0" fill="none"/></svg><div class="a" style="left:1131px;top:744px;width:15px;height:15px;background:#d4d0cc;"></div><svg class="a" style="left:1131px;top:744px;" width="15" height="15" viewBox="0 0 15 15"><path d="M7.5 12L12 3H3z" fill="#e8a050" stroke="#806040" stroke-width=".8"/></svg><div class="a" style="left:274px;top:759px;width:875px;height:20px;background:#dadada;"></div><svg class="a" style="left:274px;top:759px;opacity:1.0" width="875" height="20"><rect width="875" height="20" fill="#fff" filter="url(#marble)"/></svg><div class="a" style="left:1147px;top:233px;width:3px;height:527px;background:#dadada;"></div><div class="a" style="left:39px;top:314px;width:160px;height:207px;background:#c6c6c6;border-top:1px solid #f4f4f4;border-left:2px solid #f0f0f0;border-right:1px solid #303030;border-bottom:1px solid #303030;"></div><svg class="a" style="left:41px;top:315px;opacity:1.0" width="157" height="205"><rect width="157" height="205" fill="#fff" filter="url(#marble)"/></svg><div class="a" style="left:41px;top:336px;width:154px;height:20px;background:#a8c0d4;border-top:1px solid #3c4850;border-left:1px solid #3c4850;border-bottom:1px solid #e8f0f4;border-right:1px solid #e8f0f4;"></div><div class="t" style="left:58px;top:320px;font-size:12px;color:#000;letter-spacing:0.22px;">New</div><div class="t" style="left:58px;top:340px;font-size:12px;color:#fff;letter-spacing:0.22px;">Bookmarks</div><div class="t" style="left:58px;top:362px;font-size:12px;color:#000;letter-spacing:0.22px;">Help on desktop</div><div class="t" style="left:58px;top:382px;font-size:12px;color:#000;letter-spacing:0.22px;">Execute command</div><div class="t" style="left:58px;top:402px;font-size:12px;color:#000;letter-spacing:0.22px;">Display properties</div><div class="t" style="left:58px;top:422px;font-size:12px;color:#000;letter-spacing:0.22px;">Unclutter windows</div><div class="t" style="left:58px;top:442px;font-size:12px;color:#000;letter-spacing:0.22px;">Cascade windows</div><div class="t" style="left:58px;top:462px;font-size:12px;color:#000;letter-spacing:0.22px;">Arrange icons</div><div class="t" style="left:58px;top:484px;font-size:12px;color:#000;letter-spacing:0.22px;">Lock screen</div><div class="t" style="left:58px;top:504px;font-size:12px;color:#000;letter-spacing:0.22px;">Logout</div><div class="a" style="left:41px;top:356px;width:154px;height:1px;background:#505050;"></div><div class="a" style="left:41px;top:357px;width:154px;height:1px;background:#f0f0f0;"></div><div class="a" style="left:41px;top:478px;width:154px;height:1px;background:#505050;"></div><div class="a" style="left:41px;top:479px;width:154px;height:1px;background:#f0f0f0;"></div><svg class="a" style="left:181px;top:321px;" width="12" height="12" viewBox="0 0 12 12"><path d="M2 3L10 6L2 9z" fill="#f0f0f0"/><path d="M2 9L10 6" stroke="#505050" stroke-width="1.2"/></svg><svg class="a" style="left:181px;top:341px;" width="12" height="12" viewBox="0 0 12 12"><path d="M2 2L10 6L2 10z" fill="#fff"/><circle cx="5" cy="6" r="1.5" fill="#000"/></svg><div class="a" style="left:195px;top:318px;width:165px;height:184px;background:#c6c6c6;border-top:1px solid #f4f4f4;border-left:2px solid #f0f0f0;border-right:1px solid #303030;border-bottom:1px solid #303030;"></div><svg class="a" style="left:197px;top:319px;opacity:1.0" width="163" height="182"><rect width="163" height="182" fill="#fff" filter="url(#marble)"/></svg><div class="t" style="left:213px;top:325px;font-size:12px;color:#000;letter-spacing:0.12px;">Folder</div><div class="t" style="left:213px;top:345px;font-size:12px;color:#000;letter-spacing:0.12px;">File System Device</div><div class="t" style="left:213px;top:365px;font-size:12px;color:#000;letter-spacing:0.12px;">FTP URL</div><div class="t" style="left:213px;top:385px;font-size:12px;color:#000;letter-spacing:0.12px;">Mime Type</div><div class="t" style="left:213px;top:405px;font-size:12px;color:#000;letter-spacing:0.12px;">Application</div><div class="t" style="left:213px;top:425px;font-size:12px;color:#000;letter-spacing:0.12px;">treeclose.xpm</div><div class="t" style="left:213px;top:445px;font-size:12px;color:#000;letter-spacing:0.12px;">treeopen.xpm</div><div class="t" style="left:213px;top:465px;font-size:12px;color:#000;letter-spacing:0.12px;">Internet Address (URL)</div><div class="t" style="left:213px;top:485px;font-size:12px;color:#000;letter-spacing:0.12px;">World Wide Web URL</div><div class="a" style="left:0px;top:634px;width:195px;height:148px;background:#dcdcdc;border-top:2px solid #f4f4f4;border-left:1px solid #f0f0f0;border-right:1px solid #c0c0c0;border-bottom:1px solid #a0a0a0;"></div><div class="a" style="left:6px;top:640px;width:184px;height:136px;background:#607878;border:1px solid #404848;"></div><svg class="a" style="left:9px;top:643px;" width="85" height="64" viewBox="0 0 85 64"><rect width="85" height="64" fill="#050508"/><rect x="17" y="8" width="1" height="1" fill="#908070" opacity="0.33"/><rect x="63" y="57" width="1" height="1" fill="#908070" opacity="0.44"/><rect x="48" y="26" width="1" height="1" fill="#908070" opacity="0.25"/><rect x="3" y="49" width="1" height="1" fill="#908070" opacity="0.42"/><rect x="0" y="57" width="1" height="1" fill="#908070" opacity="0.33"/><rect x="29" y="13" width="1" height="1" fill="#908070" opacity="0.65"/><rect x="3" y="2" width="1" height="1" fill="#908070" opacity="0.21"/><rect x="69" y="1" width="1" height="1" fill="#908070" opacity="0.67"/><rect x="48" y="27" width="1" height="1" fill="#908070" opacity="0.68"/><rect x="3" y="28" width="1" height="1" fill="#908070" opacity="0.58"/><rect x="63" y="29" width="1" height="1" fill="#908070" opacity="0.37"/><rect x="28" y="58" width="1" height="1" fill="#908070" opacity="0.68"/><rect x="2" y="53" width="1" height="1" fill="#908070" opacity="0.62"/><rect x="71" y="12" width="1" height="1" fill="#908070" opacity="0.29"/><rect x="37" y="15" width="1" height="1" fill="#908070" opacity="0.57"/><rect x="64" y="54" width="1" height="1" fill="#908070" opacity="0.45"/><rect x="24" y="38" width="1" height="1" fill="#908070" opacity="0.34"/><rect x="63" y="50" width="1" height="1" fill="#908070" opacity="0.49"/><rect x="4" y="61" width="1" height="1" fill="#908070" opacity="0.32"/><rect x="51" y="53" width="1" height="1" fill="#908070" opacity="0.53"/><rect x="46" y="47" width="1" height="1" fill="#908070" opacity="0.24"/><rect x="84" y="13" width="1" height="1" fill="#908070" opacity="0.59"/><rect x="66" y="50" width="1" height="1" fill="#908070" opacity="0.39"/><rect x="3" y="60" width="1" height="1" fill="#908070" opacity="0.22"/><rect x="78" y="50" width="1" height="1" fill="#908070" opacity="0.52"/><rect x="21" y="29" width="1" height="1" fill="#908070" opacity="0.69"/><rect x="25" y="29" width="1" height="1" fill="#908070" opacity="0.40"/><rect x="44" y="45" width="1" height="1" fill="#908070" opacity="0.43"/><rect x="34" y="0" width="1" height="1" fill="#908070" opacity="0.39"/><rect x="65" y="16" width="1" height="1" fill="#908070" opacity="0.46"/><defs><radialGradient id="tp1" cx="0.42" cy="0.2" r="0.8"><stop offset="0" stop-color="#78b0dc"/><stop offset="0.45" stop-color="#3c80a0"/><stop offset="1" stop-color="#204840"/></radialGradient><linearGradient id="tr1" x1="0" y1="0" x2="0" y2="1"><stop offset="0" stop-color="#2a5a68"/><stop offset="1" stop-color="#0a1420"/></linearGradient></defs><path d="M18.7 35.2 C18.7 -1.1 66.3 -1.1 66.3 35.2z" fill="url(#tp1)"/><ellipse cx="36.7" cy="28.8" rx="4.0" ry="1.1" fill="#2a7060" opacity="0.5"/><ellipse cx="31.0" cy="11.2" rx="4.3" ry="1.2" fill="#2a7060" opacity="0.5"/><ellipse cx="33.2" cy="24.2" rx="3.0" ry="1.1" fill="#2a7060" opacity="0.5"/><ellipse cx="34.4" cy="22.1" rx="2.5" ry="1.3" fill="#2a7060" opacity="0.5"/><ellipse cx="47.5" cy="20.6" rx="3.0" ry="1.5" fill="#2a7060" opacity="0.5"/><ellipse cx="31.2" cy="19.1" rx="3.3" ry="1.2" fill="#2a7060" opacity="0.5"/><ellipse cx="33.2" cy="30.1" rx="3.5" ry="1.2" fill="#2a7060" opacity="0.5"/><ellipse cx="45.0" cy="28.3" rx="2.1" ry="1.0" fill="#2a7060" opacity="0.5"/><path d="M18.7 35.2 L66.3 35.2 C66.3 56.1 54.4 62.1 42.5 62.1 C30.6 62.1 18.7 56.1 18.7 35.2z" fill="url(#tr1)"/><rect x="24.0" y="36.2" width="31.9" height="1" fill="#06080c" opacity="0.6"/><rect x="19.2" y="38.6" width="40.4" height="1" fill="#06080c" opacity="0.6"/><rect x="24.1" y="41.0" width="27.6" height="1" fill="#06080c" opacity="0.6"/><rect x="23.5" y="43.4" width="33.0" height="1" fill="#06080c" opacity="0.6"/><rect x="22.1" y="45.8" width="30.4" height="1" fill="#06080c" opacity="0.6"/><rect x="23.8" y="48.2" width="35.7" height="1" fill="#06080c" opacity="0.6"/><rect x="24.5" y="50.6" width="32.5" height="1" fill="#06080c" opacity="0.6"/><rect x="19.0" y="53.0" width="28.2" height="1" fill="#06080c" opacity="0.6"/><rect x="20.4" y="55.4" width="34.9" height="1" fill="#06080c" opacity="0.6"/><rect x="26.9" y="57.8" width="39.0" height="1" fill="#06080c" opacity="0.6"/><rect x="26.3" y="60.2" width="39.3" height="1" fill="#06080c" opacity="0.6"/></svg><svg class="a" style="left:100px;top:643px;" width="87" height="64" viewBox="0 0 87 64"><rect width="87" height="64" fill="#050508"/><rect x="7" y="11" width="1" height="1" fill="#908070" opacity="0.24"/><rect x="21" y="39" width="1" height="1" fill="#908070" opacity="0.33"/><rect x="27" y="4" width="1" height="1" fill="#908070" opacity="0.49"/><rect x="20" y="55" width="1" height="1" fill="#908070" opacity="0.52"/><rect x="65" y="47" width="1" height="1" fill="#908070" opacity="0.47"/><rect x="56" y="34" width="1" height="1" fill="#908070" opacity="0.65"/><rect x="3" y="46" width="1" height="1" fill="#908070" opacity="0.43"/><rect x="40" y="48" width="1" height="1" fill="#908070" opacity="0.41"/><rect x="67" y="21" width="1" height="1" fill="#908070" opacity="0.48"/><rect x="30" y="29" width="1" height="1" fill="#908070" opacity="0.21"/><rect x="41" y="22" width="1" height="1" fill="#908070" opacity="0.27"/><rect x="65" y="46" width="1" height="1" fill="#908070" opacity="0.70"/><rect x="86" y="23" width="1" height="1" fill="#908070" opacity="0.70"/><rect x="57" y="53" width="1" height="1" fill="#908070" opacity="0.57"/><rect x="46" y="45" width="1" height="1" fill="#908070" opacity="0.38"/><rect x="57" y="20" width="1" height="1" fill="#908070" opacity="0.68"/><rect x="51" y="59" width="1" height="1" fill="#908070" opacity="0.53"/><rect x="31" y="62" width="1" height="1" fill="#908070" opacity="0.34"/><rect x="63" y="45" width="1" height="1" fill="#908070" opacity="0.53"/><rect x="58" y="59" width="1" height="1" fill="#908070" opacity="0.38"/><rect x="71" y="58" width="1" height="1" fill="#908070" opacity="0.44"/><rect x="28" y="41" width="1" height="1" fill="#908070" opacity="0.61"/><rect x="21" y="34" width="1" height="1" fill="#908070" opacity="0.59"/><rect x="61" y="39" width="1" height="1" fill="#908070" opacity="0.35"/><rect x="64" y="52" width="1" height="1" fill="#908070" opacity="0.36"/><rect x="26" y="62" width="1" height="1" fill="#908070" opacity="0.46"/><rect x="79" y="9" width="1" height="1" fill="#908070" opacity="0.59"/><rect x="43" y="1" width="1" height="1" fill="#908070" opacity="0.65"/><rect x="24" y="13" width="1" height="1" fill="#908070" opacity="0.23"/><rect x="83" y="6" width="1" height="1" fill="#908070" opacity="0.34"/><defs><radialGradient id="tp2" cx="0.42" cy="0.2" r="0.8"><stop offset="0" stop-color="#78b0dc"/><stop offset="0.45" stop-color="#3c80a0"/><stop offset="1" stop-color="#204840"/></radialGradient><linearGradient id="tr2" x1="0" y1="0" x2="0" y2="1"><stop offset="0" stop-color="#2a5a68"/><stop offset="1" stop-color="#0a1420"/></linearGradient></defs><path d="M19.1 35.2 C19.1 -1.1 67.9 -1.1 67.9 35.2z" fill="url(#tp2)"/><ellipse cx="35.8" cy="25.6" rx="3.2" ry="1.0" fill="#2a7060" opacity="0.5"/><ellipse cx="55.4" cy="14.1" rx="2.1" ry="1.3" fill="#2a7060" opacity="0.5"/><ellipse cx="46.3" cy="26.7" rx="2.3" ry="1.3" fill="#2a7060" opacity="0.5"/><ellipse cx="32.1" cy="20.5" rx="4.3" ry="1.7" fill="#2a7060" opacity="0.5"/><ellipse cx="53.3" cy="27.0" rx="4.6" ry="1.7" fill="#2a7060" opacity="0.5"/><ellipse cx="42.8" cy="15.7" rx="4.0" ry="1.3" fill="#2a7060" opacity="0.5"/><ellipse cx="33.8" cy="20.4" rx="4.6" ry="1.1" fill="#2a7060" opacity="0.5"/><ellipse cx="45.6" cy="19.3" rx="3.5" ry="1.1" fill="#2a7060" opacity="0.5"/><path d="M19.1 35.2 L67.9 35.2 C67.9 56.1 55.7 62.1 43.5 62.1 C31.3 62.1 19.1 56.1 19.1 35.2z" fill="url(#tr2)"/><rect x="21.3" y="36.2" width="41.4" height="1" fill="#06080c" opacity="0.6"/><rect x="20.2" y="38.6" width="34.5" height="1" fill="#06080c" opacity="0.6"/><rect x="27.5" y="41.0" width="29.1" height="1" fill="#06080c" opacity="0.6"/><rect x="21.2" y="43.4" width="41.5" height="1" fill="#06080c" opacity="0.6"/><rect x="23.3" y="45.8" width="38.3" height="1" fill="#06080c" opacity="0.6"/><rect x="19.5" y="48.2" width="31.4" height="1" fill="#06080c" opacity="0.6"/><rect x="20.8" y="50.6" width="37.5" height="1" fill="#06080c" opacity="0.6"/><rect x="19.9" y="53.0" width="43.0" height="1" fill="#06080c" opacity="0.6"/><rect x="19.4" y="55.4" width="38.6" height="1" fill="#06080c" opacity="0.6"/><rect x="19.3" y="57.8" width="29.3" height="1" fill="#06080c" opacity="0.6"/><rect x="27.1" y="60.2" width="27.4" height="1" fill="#06080c" opacity="0.6"/></svg><svg class="a" style="left:9px;top:710px;" width="85" height="63" viewBox="0 0 85 63"><rect width="85" height="63" fill="#050508"/><rect x="30" y="37" width="1" height="1" fill="#908070" opacity="0.47"/><rect x="47" y="58" width="1" height="1" fill="#908070" opacity="0.50"/><rect x="80" y="37" width="1" height="1" fill="#908070" opacity="0.23"/><rect x="1" y="58" width="1" height="1" fill="#908070" opacity="0.62"/><rect x="33" y="35" width="1" height="1" fill="#908070" opacity="0.32"/><rect x="60" y="34" width="1" height="1" fill="#908070" opacity="0.62"/><rect x="60" y="25" width="1" height="1" fill="#908070" opacity="0.52"/><rect x="19" y="14" width="1" height="1" fill="#908070" opacity="0.52"/><rect x="66" y="24" width="1" height="1" fill="#908070" opacity="0.57"/><rect x="8" y="10" width="1" height="1" fill="#908070" opacity="0.58"/><rect x="75" y="2" width="1" height="1" fill="#908070" opacity="0.35"/><rect x="3" y="52" width="1" height="1" fill="#908070" opacity="0.63"/><rect x="60" y="38" width="1" height="1" fill="#908070" opacity="0.56"/><rect x="49" y="45" width="1" height="1" fill="#908070" opacity="0.59"/><rect x="54" y="25" width="1" height="1" fill="#908070" opacity="0.56"/><rect x="73" y="28" width="1" height="1" fill="#908070" opacity="0.68"/><rect x="17" y="56" width="1" height="1" fill="#908070" opacity="0.38"/><rect x="4" y="8" width="1" height="1" fill="#908070" opacity="0.45"/><rect x="33" y="61" width="1" height="1" fill="#908070" opacity="0.54"/><rect x="80" y="54" width="1" height="1" fill="#908070" opacity="0.35"/><rect x="64" y="53" width="1" height="1" fill="#908070" opacity="0.39"/><rect x="44" y="34" width="1" height="1" fill="#908070" opacity="0.49"/><rect x="74" y="14" width="1" height="1" fill="#908070" opacity="0.65"/><rect x="3" y="54" width="1" height="1" fill="#908070" opacity="0.34"/><rect x="77" y="42" width="1" height="1" fill="#908070" opacity="0.55"/><rect x="41" y="61" width="1" height="1" fill="#908070" opacity="0.47"/><rect x="73" y="36" width="1" height="1" fill="#908070" opacity="0.25"/><rect x="83" y="13" width="1" height="1" fill="#908070" opacity="0.52"/><rect x="73" y="17" width="1" height="1" fill="#908070" opacity="0.34"/><rect x="8" y="30" width="1" height="1" fill="#908070" opacity="0.63"/><defs><radialGradient id="tp3" cx="0.42" cy="0.2" r="0.8"><stop offset="0" stop-color="#78b0dc"/><stop offset="0.45" stop-color="#3c80a0"/><stop offset="1" stop-color="#204840"/></radialGradient><linearGradient id="tr3" x1="0" y1="0" x2="0" y2="1"><stop offset="0" stop-color="#2a5a68"/><stop offset="1" stop-color="#0a1420"/></linearGradient></defs><path d="M18.7 34.7 C18.7 -1.1 66.3 -1.1 66.3 34.7z" fill="url(#tp3)"/><ellipse cx="40.3" cy="23.6" rx="2.5" ry="1.0" fill="#2a7060" opacity="0.5"/><ellipse cx="51.3" cy="17.4" rx="4.9" ry="1.9" fill="#2a7060" opacity="0.5"/><ellipse cx="39.6" cy="20.4" rx="3.6" ry="1.6" fill="#2a7060" opacity="0.5"/><ellipse cx="44.8" cy="22.5" rx="3.9" ry="1.9" fill="#2a7060" opacity="0.5"/><ellipse cx="42.7" cy="19.8" rx="4.2" ry="1.2" fill="#2a7060" opacity="0.5"/><ellipse cx="37.8" cy="31.2" rx="3.6" ry="1.5" fill="#2a7060" opacity="0.5"/><ellipse cx="30.9" cy="19.5" rx="3.7" ry="1.0" fill="#2a7060" opacity="0.5"/><ellipse cx="45.3" cy="24.0" rx="2.2" ry="1.6" fill="#2a7060" opacity="0.5"/><path d="M18.7 34.7 L66.3 34.7 C66.3 55.1 54.4 61.1 42.5 61.1 C30.6 61.1 18.7 55.1 18.7 34.7z" fill="url(#tr3)"/><rect x="28.1" y="35.7" width="25.5" height="1" fill="#06080c" opacity="0.6"/><rect x="26.3" y="38.1" width="31.6" height="1" fill="#06080c" opacity="0.6"/><rect x="20.1" y="40.5" width="29.4" height="1" fill="#06080c" opacity="0.6"/><rect x="26.0" y="42.9" width="40.4" height="1" fill="#06080c" opacity="0.6"/><rect x="19.1" y="45.3" width="35.5" height="1" fill="#06080c" opacity="0.6"/><rect x="19.1" y="47.7" width="37.5" height="1" fill="#06080c" opacity="0.6"/><rect x="21.9" y="50.1" width="40.6" height="1" fill="#06080c" opacity="0.6"/><rect x="28.0" y="52.5" width="33.4" height="1" fill="#06080c" opacity="0.6"/><rect x="28.2" y="54.9" width="29.7" height="1" fill="#06080c" opacity="0.6"/><rect x="19.4" y="57.2" width="35.2" height="1" fill="#06080c" opacity="0.6"/><rect x="19.0" y="59.7" width="27.6" height="1" fill="#06080c" opacity="0.6"/></svg><svg class="a" style="left:100px;top:710px;" width="87" height="63" viewBox="0 0 87 63"><rect width="87" height="63" fill="#050508"/><rect x="30" y="19" width="1" height="1" fill="#908070" opacity="0.25"/><rect x="50" y="30" width="1" height="1" fill="#908070" opacity="0.28"/><rect x="8" y="1" width="1" height="1" fill="#908070" opacity="0.40"/><rect x="37" y="51" width="1" height="1" fill="#908070" opacity="0.70"/><rect x="7" y="14" width="1" height="1" fill="#908070" opacity="0.46"/><rect x="46" y="17" width="1" height="1" fill="#908070" opacity="0.59"/><rect x="13" y="16" width="1" height="1" fill="#908070" opacity="0.31"/><rect x="3" y="53" width="1" height="1" fill="#908070" opacity="0.52"/><rect x="33" y="51" width="1" height="1" fill="#908070" opacity="0.34"/><rect x="21" y="19" width="1" height="1" fill="#908070" opacity="0.34"/><rect x="47" y="5" width="1" height="1" fill="#908070" opacity="0.62"/><rect x="43" y="42" width="1" height="1" fill="#908070" opacity="0.39"/><rect x="31" y="11" width="1" height="1" fill="#908070" opacity="0.32"/><rect x="35" y="5" width="1" height="1" fill="#908070" opacity="0.67"/><rect x="70" y="53" width="1" height="1" fill="#908070" opacity="0.35"/><rect x="37" y="36" width="1" height="1" fill="#908070" opacity="0.55"/><rect x="39" y="54" width="1" height="1" fill="#908070" opacity="0.58"/><rect x="24" y="26" width="1" height="1" fill="#908070" opacity="0.41"/><rect x="36" y="27" width="1" height="1" fill="#908070" opacity="0.43"/><rect x="29" y="19" width="1" height="1" fill="#908070" opacity="0.33"/><rect x="5" y="5" width="1" height="1" fill="#908070" opacity="0.22"/><rect x="80" y="17" width="1" height="1" fill="#908070" opacity="0.46"/><rect x="82" y="30" width="1" height="1" fill="#908070" opacity="0.55"/><rect x="18" y="43" width="1" height="1" fill="#908070" opacity="0.30"/><rect x="52" y="58" width="1" height="1" fill="#908070" opacity="0.30"/><rect x="80" y="28" width="1" height="1" fill="#908070" opacity="0.34"/><rect x="45" y="27" width="1" height="1" fill="#908070" opacity="0.57"/><rect x="41" y="40" width="1" height="1" fill="#908070" opacity="0.48"/><rect x="41" y="6" width="1" height="1" fill="#908070" opacity="0.62"/><rect x="29" y="17" width="1" height="1" fill="#908070" opacity="0.58"/><defs><radialGradient id="tp4" cx="0.42" cy="0.2" r="0.8"><stop offset="0" stop-color="#78b0dc"/><stop offset="0.45" stop-color="#3c80a0"/><stop offset="1" stop-color="#204840"/></radialGradient><linearGradient id="tr4" x1="0" y1="0" x2="0" y2="1"><stop offset="0" stop-color="#2a5a68"/><stop offset="1" stop-color="#0a1420"/></linearGradient></defs><path d="M19.1 34.7 C19.1 -1.1 67.9 -1.1 67.9 34.7z" fill="url(#tp4)"/><ellipse cx="34.6" cy="18.8" rx="4.9" ry="1.3" fill="#2a7060" opacity="0.5"/><ellipse cx="31.5" cy="11.8" rx="2.5" ry="1.8" fill="#2a7060" opacity="0.5"/><ellipse cx="40.2" cy="16.9" rx="2.3" ry="2.0" fill="#2a7060" opacity="0.5"/><ellipse cx="41.6" cy="15.2" rx="2.2" ry="1.1" fill="#2a7060" opacity="0.5"/><ellipse cx="35.4" cy="24.9" rx="2.4" ry="1.0" fill="#2a7060" opacity="0.5"/><ellipse cx="43.3" cy="16.1" rx="5.0" ry="1.1" fill="#2a7060" opacity="0.5"/><ellipse cx="44.2" cy="27.0" rx="3.2" ry="2.0" fill="#2a7060" opacity="0.5"/><ellipse cx="43.0" cy="15.9" rx="3.2" ry="1.0" fill="#2a7060" opacity="0.5"/><path d="M19.1 34.7 L67.9 34.7 C67.9 55.1 55.7 61.1 43.5 61.1 C31.3 61.1 19.1 55.1 19.1 34.7z" fill="url(#tr4)"/><rect x="25.1" y="35.7" width="29.0" height="1" fill="#06080c" opacity="0.6"/><rect x="22.4" y="38.1" width="27.8" height="1" fill="#06080c" opacity="0.6"/><rect x="23.6" y="40.5" width="25.2" height="1" fill="#06080c" opacity="0.6"/><rect x="25.9" y="42.9" width="41.8" height="1" fill="#06080c" opacity="0.6"/><rect x="28.4" y="45.3" width="38.7" height="1" fill="#06080c" opacity="0.6"/><rect x="28.5" y="47.7" width="24.7" height="1" fill="#06080c" opacity="0.6"/><rect x="22.0" y="50.1" width="43.2" height="1" fill="#06080c" opacity="0.6"/><rect x="26.7" y="52.5" width="32.4" height="1" fill="#06080c" opacity="0.6"/><rect x="28.3" y="54.9" width="36.5" height="1" fill="#06080c" opacity="0.6"/><rect x="27.1" y="57.2" width="30.1" height="1" fill="#06080c" opacity="0.6"/><rect x="21.0" y="59.7" width="33.0" height="1" fill="#06080c" opacity="0.6"/></svg><div class="a" style="left:8px;top:642px;width:87px;height:66px;border:1px solid #e8e830;"></div><div class="a" style="left:10px;top:644px;width:41px;height:16px;background:#a4a4a4;border-top:4px solid #c8c8c8;"></div><div class="a" style="left:29px;top:653px;width:65px;height:48px;background:#9c9c9c;border:1px solid #f0f000;border-top-width:6px;"></div><div class="a" style="left:10px;top:691px;width:12px;height:9px;background:#d8d8d8;border-bottom:4px solid #9a9a9a;"></div><div class="a" style="left:101px;top:691px;width:12px;height:9px;background:#d8d8d8;border-bottom:4px solid #9a9a9a;"></div><div class="a" style="left:10px;top:756px;width:12px;height:9px;background:#d8d8d8;border-bottom:4px solid #9a9a9a;"></div><div class="a" style="left:101px;top:756px;width:12px;height:9px;background:#d8d8d8;border-bottom:4px solid #9a9a9a;"></div><div class="a" style="left:32px;top:724px;width:7px;height:27px;background:#b8b8b8;border:1px solid #101010;box-shadow:inset 1px 1px 0 #e8e8e8;"></div><div class="a" style="left:0px;top:782px;width:1152px;height:82px;background:#c4c3c4;border-top:1px solid #f4f4f4;"></div><div class="a" style="left:1px;top:784px;width:20px;height:22px;background:#d0d0dc;border-style:solid;border-width:1px;border-color:#f4f4f4 #404040 #404040 #f4f4f4;"></div><div class="a" style="left:4px;top:787px;width:14px;height:16px;border:1px dotted #303030;"></div><div class="t" style="left:7px;top:790px;font-size:12px;color:#000;">S</div><div class="a" style="left:22px;top:784px;width:151px;height:23px;background:#c4c3c4;border-style:solid;border-width:1px;border-color:#f8f8f8 #303030 #303030 #f8f8f8;"></div><div class="a" style="left:32px;top:792px;width:6px;height:6px;background:#000;border-radius:3px;border:1px solid #000;background:radial-gradient(circle at 40% 40%,#fff 0 20%,#000 30%);"></div><div class="t" style="left:43px;top:790px;font-size:12px;color:#000;letter-spacing:0.35px;">(XMMS - 49. Nirvan...</div><div class="a" style="left:173px;top:784px;width:151px;height:23px;background:#c4c3c4;border-style:solid;border-width:1px;border-color:#f8f8f8 #303030 #303030 #f8f8f8;"></div><div class="a" style="left:176px;top:788px;width:17px;height:15px;background:#000;border:1px solid #000;box-shadow:inset 0 0 0 1px #d0d0d0, inset 0 0 0 2px #000;"></div><div class="t" style="left:195px;top:790px;font-size:12px;color:#000;letter-spacing:0.35px;">('Konsole')</div><div class="a" style="left:325px;top:784px;width:150px;height:23px;background:#e4e4e4;border-top:2px solid #202020;border-left:2px solid #202020;border-right:1px solid #f8f8f8;border-bottom:1px solid #f8f8f8;background-image:repeating-conic-gradient(#f4f4f4 0 25%,#cfcfcf 0 50%);background-size:2px 2px;"></div><svg class="a" style="left:329px;top:787px;" width="17" height="18" viewBox="0 0 17 18"><path d="M0.6 2L2 1L12.5 1L12.5 16.5L2 16.5L0.6 15.5Z" fill="#d4d4d4" stroke="#000" stroke-width="1.2"/><rect x="1.6" y="2" width="3" height="13.5" fill="#a8a8a8"/><path d="M4.8 2v14" stroke="#fff" stroke-width="0.8"/><path d="M6 11.5h5M6 14h5" stroke="#707070" stroke-width="0.9"/><path d="M5.5 3.8L10 3.8L11 2.6L13 2.6L14.8 4.6L14.8 9.8L5.5 9.8Z" fill="#f0dcc0" stroke="#000" stroke-width="1.2" stroke-linejoin="round"/><path d="M8.5 5.5v3" stroke="#000" stroke-width="1"/></svg><div class="t" style="left:346px;top:790px;font-size:12px;color:#000;letter-spacing:0.35px;">file:/home/perry/daten</div><div class="a" style="left:475px;top:784px;width:151px;height:23px;background:#c4c3c4;border-style:solid;border-width:1px;border-color:#f8f8f8 #303030 #303030 #f8f8f8;"></div><svg class="a" style="left:479px;top:787px;" width="18" height="18" viewBox="0 0 18 18"><rect x="1.5" y="1.5" width="12" height="13" fill="#fff" stroke="#000"/><circle cx="7" cy="8" r="3.5" fill="none" stroke="#000" stroke-width="1.2"/><path d="M10 11l6 6" stroke="#000" stroke-width="1.5"/></svg><div class="t" style="left:496px;top:790px;font-size:12px;color:#000;letter-spacing:0.35px;">'Find Files'</div><div class="a" style="left:626px;top:784px;width:151px;height:23px;background:#c4c3c4;border-style:solid;border-width:1px;border-color:#f8f8f8 #303030 #303030 #f8f8f8;"></div><div class="a" style="left:636px;top:792px;width:6px;height:6px;background:#000;border-radius:3px;border:1px solid #000;background:radial-gradient(circle at 40% 40%,#fff 0 20%,#000 30%);"></div><div class="t" style="left:647px;top:790px;font-size:12px;color:#000;letter-spacing:0.35px;">kpager</div><div class="a" style="left:778px;top:784px;width:153px;height:23px;background:#c4c3c4;border-style:solid;border-width:1px;border-color:#f8f8f8 #303030 #303030 #f8f8f8;"></div><div class="a" style="left:788px;top:792px;width:6px;height:6px;background:#000;border-radius:3px;border:1px solid #000;background:radial-gradient(circle at 40% 40%,#fff 0 20%,#000 30%);"></div><div class="t" style="left:799px;top:790px;font-size:12px;color:#000;letter-spacing:0.35px;">The GIMP</div><div class="a" style="left:0px;top:807px;width:1152px;height:57px;background:#c4c3c4;border-top:1px solid #f4f4f4;"></div><div class="a" style="left:3px;top:809px;width:9px;height:54px;background:#b8bcd0;border-left:1px solid #f4f4f4;border-right:1px solid #505050;background-image:radial-gradient(#7080a0 35%,transparent 40%);background-size:3px 3px;"></div><svg class="a" style="left:4px;top:830px;" width="8" height="10" viewBox="0 0 8 10"><path d="M7 1L1 5L7 9z" fill="#000"/></svg><div class="a" style="left:1141px;top:809px;width:10px;height:54px;background:#b8bcd0;border-left:1px solid #f4f4f4;border-right:1px solid #505050;background-image:radial-gradient(#7080a0 35%,transparent 40%);background-size:3px 3px;"></div><svg class="a" style="left:1142px;top:830px;" width="8" height="10" viewBox="0 0 8 10"><path d="M1 1L7 5L1 9z" fill="#000"/></svg><svg class="a" style="left:14px;top:813px;" width="46" height="48" viewBox="0 0 46 48"><defs><radialGradient id="kg" cx="0.45" cy="0.7" r="0.6"><stop offset="0" stop-color="#f8f0e0"/><stop offset="0.6" stop-color="#d8a050"/><stop offset="1" stop-color="#f0f0f0"/></radialGradient></defs><path d="M38.20 21.38 L43.74 21.11 L43.74 27.69 L38.20 27.42 L35.89 33.01 L39.99 36.74 L35.34 41.39 L31.61 37.29 L26.02 39.60 L26.29 45.14 L19.71 45.14 L19.98 39.60 L14.39 37.29 L10.66 41.39 L6.01 36.74 L10.11 33.01 L7.80 27.42 L2.26 27.69 L2.26 21.11 L7.80 21.38 L10.11 15.79 L6.01 12.06 L10.66 7.41 L14.39 11.51 L19.98 9.20 L19.71 3.66 L26.29 3.66 L26.02 9.20 L31.61 11.51 L35.34 7.41 L39.99 12.06 L35.89 15.79Z" fill="#f0f0f0" stroke="#000" stroke-width="1.2" stroke-linejoin="round"/><circle cx="23" cy="24.4" r="12.5" fill="url(#kg)" stroke="#303030" stroke-width="1"/><path d="M26.5 14L37.5 1.5L44 3.5L32.5 17.5L45.5 30L36 33.5L26.5 21.5Z" fill="#fafafa" stroke="#000" stroke-width="1.3" stroke-linejoin="round"/><rect x="18.5" y="1.5" width="8.2" height="31" fill="#fafafa" stroke="#000" stroke-width="1.3"/></svg><svg class="a" style="left:66px;top:813px;" width="46" height="48" viewBox="0 0 46 48"><path d="M20.5 3L43.5 13.58L43.5 35.58L20.5 25Z" fill="#f8f8f8" stroke="#000" stroke-width="1.2"/><path d="M27.4 6.773999999999999L35.68 10.5828L35.68 14.382800000000001L27.4 10.574Z" fill="#2a2ad0"/><path d="M37.06 11.6176v3.5M39.82 12.8872v3.5M22.8 5.058v3.5" stroke="#909090" stroke-width="1.6"/><path d="M41.5 19.58v14" stroke="#c8c8c8" stroke-width="1.5"/><path d="M10.5 7.2L33.5 17.78L33.5 40.28L10.5 29.7Z" fill="#f8f8f8" stroke="#000" stroke-width="1.2"/><path d="M17.4 10.974L25.68 14.7828L25.68 18.5828L17.4 14.774000000000001Z" fill="#2a2ad0"/><path d="M27.06 15.817599999999999v3.5M29.82 17.0872v3.5M12.8 9.258000000000001v3.5" stroke="#909090" stroke-width="1.6"/><path d="M31.5 23.78v14.5" stroke="#c8c8c8" stroke-width="1.5"/><path d="M3.3 19L19.3 26.68L19.3 42.28L3.3 34.6Z" fill="#f8f8f8" stroke="#000" stroke-width="1.2"/><path d="M8.1 21.904L13.86 24.6688L13.86 28.4688L8.1 25.704Z" fill="#20a098"/><path d="M14.82 25.5296v3.5M16.74 26.4512v3.5M4.9 20.768v3.5" stroke="#909090" stroke-width="1.6"/><path d="M17.3 32.68v7.6" stroke="#c8c8c8" stroke-width="1.5"/></svg><svg class="a" style="left:118px;top:813px;" width="46" height="48" viewBox="0 0 46 48"><defs><linearGradient id="lf" x1="0" y1="0" x2="1" y2="1"><stop offset="0" stop-color="#fff"/><stop offset="0.5" stop-color="#e8dce0"/><stop offset="1" stop-color="#909090"/></linearGradient></defs><path d="M38 30L43 33L40 37L36 36z" fill="#000"/><path d="M7.5 5.5L36 16.5L36.5 43L7.5 31z" fill="url(#lf)" stroke="#000" stroke-width="1.2"/><path d="M7 6L10.5 3.5L14 3.5L23 7.5L28.6 8.4L34 11L38.5 15.5L38.5 41L36.5 43L36.2 16.8L30 13.5L24 12.5L10 7z" fill="#e8b078" stroke="#000" stroke-width="1.2" stroke-linejoin="round"/><path d="M11 3.8L23.6 5L16.8 13.8L24.3 15L18.6 25L23 26.3L9.3 41.3L13 30L4.3 28.8L13.6 18.8L3.6 18.1Z" fill="#f4f028" stroke="#000" stroke-width="1.1" stroke-linejoin="round"/><path d="M13 6L20 7L14 14" fill="none" stroke="#fff" stroke-width="1" opacity=".7"/></svg><svg class="a" style="left:170px;top:813px;" width="46" height="48" viewBox="0 0 46 48"><defs><linearGradient id="bx" x1="0" y1="0" x2="1" y2="0"><stop offset="0" stop-color="#fcf8d0"/><stop offset="1" stop-color="#d8d080"/></linearGradient><linearGradient id="bxin" x1="0" y1="0" x2="1" y2="0"><stop offset="0" stop-color="#d8d070"/><stop offset="0.45" stop-color="#706810"/><stop offset="1" stop-color="#e8e090"/></linearGradient></defs><path d="M7.4 14.4L7.4 36.2L21.7 42.5L41.7 33.7L41.7 13.7L24 20Z" fill="url(#bx)" stroke="#000" stroke-width="1.2"/><path d="M3.6 9.4L19.2 1.3L24.2 5.6L29.2 1.3L44.2 9.4L44.2 13.7L24 20L3.6 13.7Z" fill="url(#bxin)" stroke="#000" stroke-width="1.2" stroke-linejoin="round"/><path d="M7.5 14.2L24 19.5L41.5 13.8" fill="none" stroke="#fff" stroke-width="1.2"/><path d="M21.7 40.6L43 24.4" stroke="#000" stroke-width="5"/><path d="M21.7 40.6L43 24.4" stroke="#70c0d0" stroke-width="3"/><path d="M38 22l5-3l3 4l-4 4z" fill="#70c0d0" stroke="#000"/><path d="M28 28.7L43 42.5" stroke="#000" stroke-width="5.2"/><path d="M28 28.7L43 42.5" stroke="#e0d0a8" stroke-width="3.2"/><path d="M16.7 27.5L27.4 17.5L33 23.1L21.7 34.4Z" fill="#c8c8d0" stroke="#000" stroke-width="1.3"/></svg><svg class="a" style="left:222px;top:813px;" width="46" height="48" viewBox="0 0 46 48"><defs><linearGradient id="hf" x1="0" y1="0" x2="1" y2="1"><stop offset="0" stop-color="#fff"/><stop offset="0.6" stop-color="#c8c8cc"/><stop offset="1" stop-color="#707078"/></linearGradient></defs><path d="M38 35L43 38L40 42L36 41z" fill="#000"/><path d="M7.4 5.6L36 15.8L36.5 42.5L7.4 31z" fill="url(#hf)" stroke="#000" stroke-width="1.2"/><path d="M7 6L10.5 3.5L14 3.5L23 8L28 8.4L34 11L38.5 15.5L38.5 41L36.5 43L36.2 16.2L30 13.5L24 12.5L10 7z" fill="#e8b078" stroke="#000" stroke-width="1.2" stroke-linejoin="round"/><rect x="5.5" y="20" width="3.8" height="6" fill="#c06050" stroke="#000"/><path d="M4.2 32.5L14.6 21.5L25 32.5V43.1H4.2Z" fill="#f4f0e8" stroke="#000" stroke-width="1.2"/><path d="M1.1 32.5L14.6 19.4L27.4 32.5" fill="none" stroke="#000" stroke-width="1.6"/><rect x="4.2" y="32.5" width="20.8" height="10.6" fill="#d8e8d0" stroke="#000" stroke-width="1"/><rect x="11.4" y="35.6" width="5.3" height="7.5" fill="#a03820"/><rect x="12.4" y="26.2" width="4.3" height="5" fill="#f0f0e0" stroke="#404020"/></svg><svg class="a" style="left:274px;top:813px;" width="46" height="48" viewBox="0 0 46 48"><rect x="2.4" y="2.2" width="40" height="37.2" fill="#d0d0d0" stroke="#000" stroke-width="1.3"/><rect x="3.6" y="3.4" width="37.6" height="34.8" fill="none" stroke="#fff" stroke-width="1"/><rect x="7.4" y="7.2" width="30.6" height="25.3" fill="#000"/><path d="M10 10.5l3.5 2.5l-3.5 2.5" fill="none" stroke="#fff" stroke-width="1"/><path d="M15 15h3" stroke="#fff" stroke-width="1"/><rect x="6.8" y="35" width="4.3" height="3" fill="#30c030"/><defs><radialGradient id="sh" cx="0.5" cy="0.9" r="0.9"><stop offset="0" stop-color="#f0c070"/><stop offset="0.5" stop-color="#fae8c0"/><stop offset="1" stop-color="#f8e0a8"/></radialGradient></defs><path d="M28 43.5L13.5 31C12 28 14 25 17 26C17 21 21 19 24 21C25 16 30 15.5 32 19C34 16 39 17 39.5 21C42 19.5 46 22 45 26L39 38Z" fill="url(#sh)" stroke="#000" stroke-width="1.2" stroke-linejoin="round"/><path d="M28 43L16 27M28 43L23.5 21.5M28 43L32 19.5M28 43L39 21.5M28 43L44 26" stroke="#c8a060" stroke-width="1" fill="none"/></svg><svg class="a" style="left:54px;top:811px;" width="10" height="6" viewBox="0 0 10 6"><path d="M0 5.5L5 0.5L10 5.5z" fill="#000"/></svg><svg class="a" style="left:106px;top:811px;" width="10" height="6" viewBox="0 0 10 6"><path d="M0 5.5L5 0.5L10 5.5z" fill="#000"/></svg><svg class="a" style="left:158px;top:811px;" width="10" height="6" viewBox="0 0 10 6"><path d="M0 5.5L5 0.5L10 5.5z" fill="#000"/></svg><svg class="a" style="left:210px;top:811px;" width="10" height="6" viewBox="0 0 10 6"><path d="M0 5.5L5 0.5L10 5.5z" fill="#000"/></svg><div class="a" style="left:329px;top:810px;width:25px;height:25px;background:#c8c8d0;border-style:solid;border-width:1px;border-color:#f4f4f4 #303030 #303030 #f4f4f4;"></div><svg class="a" style="left:333px;top:814px;" width="17" height="17" viewBox="0 0 17 17"><path d="M3 3L14 14M14 3L3 14" stroke="#202020" stroke-width="1.5"/><path d="M3 3l3 0l-3 3z" fill="#000"/></svg><div class="a" style="left:329px;top:836px;width:25px;height:25px;background:#c8c8d0;border-style:solid;border-width:1px;border-color:#f4f4f4 #303030 #303030 #f4f4f4;"></div><svg class="a" style="left:333px;top:840px;" width="17" height="17" viewBox="0 0 17 17"><rect x="4" y="8" width="9" height="7" fill="#e0e0e0" stroke="#000"/><path d="M6 8V5a2.5 2.5 0 0 1 5 0v3" fill="none" stroke="#000" stroke-width="1.3"/></svg><div class="a" style="left:355px;top:810px;width:50px;height:25px;background:#c0c4d4;border-top:1px solid #303030;border-left:1px solid #303030;border-right:1px solid #f4f4f4;border-bottom:1px solid #f4f4f4;"></div><div class="t" style="left:364px;top:820px;font-size:12px;color:#000;letter-spacing:0.4px;">One</div><div class="a" style="left:406px;top:810px;width:50px;height:25px;background:#c0c4d4;border-style:solid;border-width:1px;border-color:#f4f4f4 #303030 #303030 #f4f4f4;"></div><div class="t" style="left:413px;top:819px;font-size:12px;color:#000;letter-spacing:0.4px;">Three</div><div class="a" style="left:355px;top:836px;width:50px;height:25px;background:#c0c4d4;border-style:solid;border-width:1px;border-color:#f4f4f4 #303030 #303030 #f4f4f4;"></div><div class="t" style="left:362px;top:845px;font-size:12px;color:#000;letter-spacing:0.4px;">Two</div><div class="a" style="left:406px;top:836px;width:50px;height:25px;background:#c0c4d4;border-style:solid;border-width:1px;border-color:#f4f4f4 #303030 #303030 #f4f4f4;"></div><div class="t" style="left:413px;top:845px;font-size:12px;color:#000;letter-spacing:0.4px;">Four</div><svg class="a" style="left:460px;top:812px;" width="46" height="46" viewBox="0 0 46 46"><rect x="11" y="37.5" width="20.6" height="4" fill="#303030"/><rect x="6" y="41.6" width="30.6" height="3.8" fill="#e8e8e8" stroke="#000" stroke-width="1"/><rect x="21" y="2.3" width="22.5" height="35" fill="#c8c8c8" stroke="#000" stroke-width="1.2"/><rect x="21.6" y="6.6" width="17" height="23.2" fill="#000"/><rect x="22.9" y="9" width="2.3" height="4" fill="#20a090"/><rect x="22.9" y="14" width="2.3" height="4" fill="#20a090"/><rect x="22.9" y="19" width="2.3" height="4" fill="#20a090"/><rect x="22.9" y="24" width="2.3" height="4" fill="#f0f0e0"/><rect x="25.9" y="9" width="2.3" height="4" fill="#40b050"/><rect x="25.9" y="14" width="2.3" height="4" fill="#40b050"/><rect x="25.9" y="19" width="2.3" height="4" fill="#40b050"/><rect x="25.9" y="24" width="2.3" height="4" fill="#f0f0e0"/><rect x="29.0" y="9" width="2.3" height="4" fill="#e0e020"/><rect x="29.0" y="14" width="2.3" height="4" fill="#e0e020"/><rect x="29.0" y="19" width="2.3" height="4" fill="#e0e020"/><rect x="29.0" y="24" width="2.3" height="4" fill="#f0f0e0"/><rect x="32.0" y="9" width="2.3" height="4" fill="#f0a060"/><rect x="32.0" y="14" width="2.3" height="4" fill="#f0a060"/><rect x="32.0" y="19" width="2.3" height="4" fill="#f0a060"/><rect x="32.0" y="24" width="2.3" height="4" fill="#f0f0e0"/><rect x="35.1" y="9" width="2.3" height="4" fill="#e02020"/><rect x="35.1" y="14" width="2.3" height="4" fill="#e02020"/><rect x="35.1" y="19" width="2.3" height="4" fill="#e02020"/><rect x="35.1" y="24" width="2.3" height="4" fill="#f0f0e0"/><rect x="0.6" y="2.3" width="21" height="35.6" fill="#40b040" stroke="#000" stroke-width="1.2"/><path d="M4 8h6M4 12h8M6 16v14M12 18v12M16 10v20M4 30h14" stroke="#a0e080" stroke-width="1" fill="none"/><rect x="11" y="9" width="5" height="4" fill="#203020"/><rect x="7" y="18" width="4" height="4" fill="#203020"/><rect x="14" y="26" width="3" height="3" fill="#203020"/><rect x="1" y="6" width="2" height="14" fill="#e0e080"/></svg><svg class="a" style="left:512px;top:812px;" width="46" height="46" viewBox="0 0 46 46"><rect x="4.1" y="6" width="31.3" height="39.4" fill="#b8b8b8" stroke="#000" stroke-width="1.2"/><path d="M4 2.3H31.6V41H0.5V6Z" fill="#fafafa" stroke="#000" stroke-width="1.2"/><path d="M0.5 6L4 2.3V6z" fill="#d0d0d0"/><circle cx="27.2" cy="7.2" r="2.6" fill="#2060e0"/><circle cx="6.3" cy="31.3" r="2.6" fill="#2060e0"/><circle cx="9.4" cy="39" r="2.4" fill="#2060e0"/><path d="M29.7 32.2L42.2 43.5" stroke="#000" stroke-width="5"/><path d="M29.7 32.2L42.2 43.5" stroke="#606060" stroke-width="3"/><circle cx="19.1" cy="21.6" r="11.5" fill="#e8ecf8" stroke="#101010" stroke-width="2"/><circle cx="17.3" cy="23.5" r="5" fill="#2050d0"/><circle cx="24.7" cy="16.6" r="2.5" fill="#2850c0"/><circle cx="26" cy="22.9" r="2.3" fill="#2040a0"/><circle cx="19" cy="14.7" r="1.5" fill="#8090e0"/></svg><div class="t" style="left:1040px;top:812px;width:90px;text-align:right;line-height:15px;letter-spacing:0.3px">Sun
14:40
Aug 01</div>
</body></html>
